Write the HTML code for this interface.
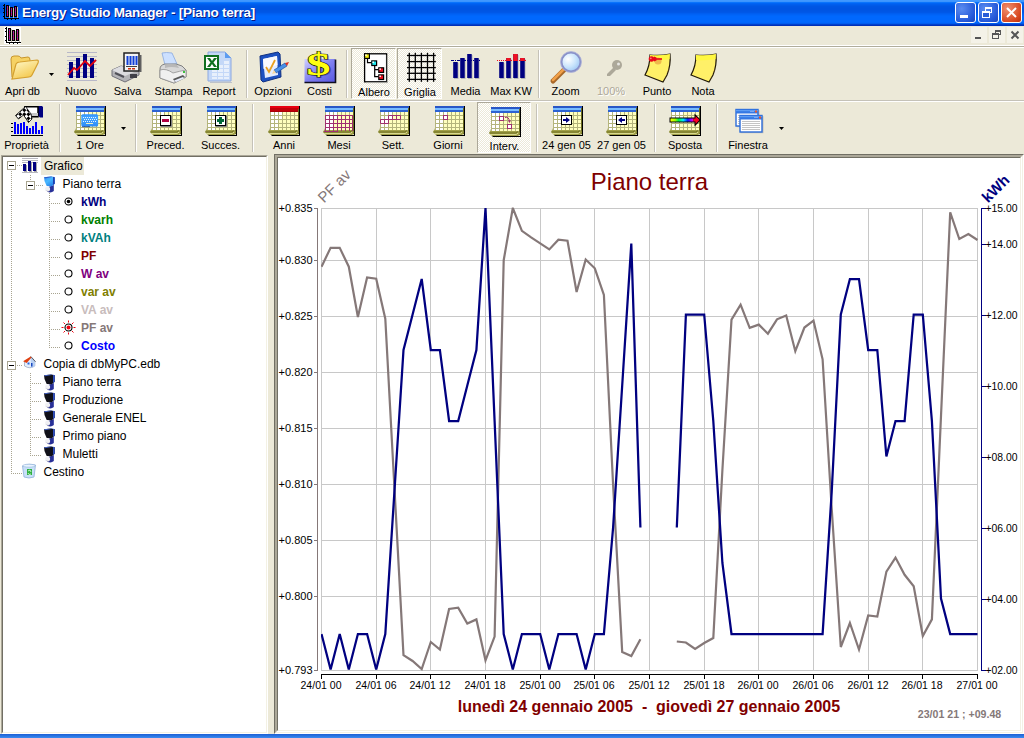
<!DOCTYPE html>
<html><head><meta charset="utf-8"><title>Energy Studio Manager - [Piano terra]</title>
<style>
html,body{margin:0;padding:0;}
body{width:1024px;height:738px;overflow:hidden;background:#ece9d8;font-family:"Liberation Sans",sans-serif;position:relative;}
.abs{position:absolute;}
#title{left:0;top:0;width:1024px;height:26px;background:linear-gradient(to bottom,#4098ff 0px,#4098ff 1px,#3c94fd 1px,#3c94fd 2px,#0a74fc 2px,#0a74fc 3px,#0064f4 3px,#0064f4 4px,#005eee 4px,#005eee 5px,#005ae8 5px,#005ae8 6px,#0056e4 6px,#0056e4 7px,#0055e3 7px,#0055e3 8px,#0054e2 8px,#0054e2 9px,#0054e2 9px,#0054e2 10px,#0055e3 10px,#0055e3 11px,#0056e5 11px,#0056e5 12px,#0058e8 12px,#0058e8 13px,#005ef0 13px,#005ef0 14px,#0062f6 14px,#0062f6 15px,#0066fa 15px,#0066fa 16px,#0068fe 16px,#0068fe 17px,#0068fe 17px,#0068fe 18px,#0068fe 18px,#0068fe 19px,#0068fe 19px,#0068fe 20px,#0068fe 20px,#0068fe 21px,#0068fe 21px,#0068fe 22px,#0066fb 22px,#0066fb 23px,#005cee 23px,#005cee 24px,#0040cc 24px,#0040cc 25px,#0030b8 25px,#0030b8 26px);}
#title .t{left:22px;top:5px;color:#fff;font-weight:bold;font-size:13.500px;white-space:nowrap;text-shadow:1px 1px 0 #0a1883;letter-spacing:-0.250px;}
.cap{top:2px;width:21px;height:21px;border-radius:3px;box-sizing:border-box;border:1px solid #fff;background:radial-gradient(circle at 30% 30%,#5a8cf0,#2458d8 70%,#1c46b8);}
.cap.x{background:radial-gradient(circle at 30% 30%,#f09070,#d84820 70%,#b83010);}
#menubar{left:0;top:26px;width:1024px;height:20px;background:#ece9d8;}
.tb{font-size:11px;color:#000;white-space:nowrap;text-align:center;}
.lbl{position:absolute;font-size:11px;color:#000;white-space:nowrap;transform:translateX(-50%);}
.sep{position:absolute;width:1px;background:#c5c2b8;box-shadow:1px 0 0 #fff;}
.tree{position:absolute;font-size:12px;white-space:nowrap;color:#000;}
.ax{font-size:11px;fill:#000;font-family:"Liberation Sans",sans-serif;}
</style></head><body>
<!-- title bar -->
<div id="title" class="abs">
 <svg class="abs" style="left:3px;top:4px" width="16" height="16" viewBox="0 0 16 16"><rect x="1" y="0" width="1" height="15" fill="#000"/><rect x="1" y="14" width="15" height="1" fill="#000"/><rect x="0" y="1" width="1" height="1" fill="#000"/><rect x="0" y="4" width="1" height="1" fill="#000"/><rect x="0" y="8" width="1" height="1" fill="#000"/><rect x="0" y="12" width="1" height="1" fill="#000"/><rect x="4" y="15" width="1" height="1" fill="#000"/><rect x="8" y="15" width="1" height="1" fill="#000"/><rect x="12" y="15" width="1" height="1" fill="#000"/><rect x="6" y="2" width="1" height="12" fill="#c8c0b0"/><rect x="3" y="1" width="3" height="12" fill="#000"/><rect x="4" y="2" width="1" height="10" fill="#c8107c"/><rect x="4" y="3" width="1" height="1" fill="#8030c0"/><rect x="4" y="6" width="1" height="1" fill="#8030c0"/><rect x="4" y="9" width="1" height="1" fill="#8030c0"/><rect x="10" y="4" width="1" height="10" fill="#c8c0b0"/><rect x="7" y="3" width="3" height="10" fill="#000"/><rect x="8" y="4" width="1" height="8" fill="#c8107c"/><rect x="8" y="5" width="1" height="1" fill="#8030c0"/><rect x="8" y="8" width="1" height="1" fill="#8030c0"/><rect x="8" y="11" width="1" height="1" fill="#8030c0"/><rect x="14" y="3" width="1" height="11" fill="#c8c0b0"/><rect x="11" y="2" width="3" height="11" fill="#000"/><rect x="12" y="3" width="1" height="9" fill="#c8107c"/><rect x="12" y="4" width="1" height="1" fill="#8030c0"/><rect x="12" y="7" width="1" height="1" fill="#8030c0"/><rect x="12" y="10" width="1" height="1" fill="#8030c0"/></svg>
 <div class="abs t">Energy Studio Manager - [Piano terra]</div>
 <div class="abs cap" style="left:955px"><div class="abs" style="left:4px;top:12px;width:8px;height:3px;background:#fff"></div></div>
 <div class="abs cap" style="left:978px"><div class="abs" style="left:6px;top:4px;width:7px;height:6px;border:1px solid #fff;border-top-width:2px;box-sizing:border-box"></div><div class="abs" style="left:3px;top:8px;width:8px;height:7px;border:1px solid #fff;border-top-width:2px;box-sizing:border-box;background:#2a5cd8"></div></div>
 <div class="abs cap x" style="left:1001px"><svg class="abs" style="left:3px;top:3px" width="13" height="13" viewBox="0 0 13 13"><path d="M2,2 L11,11 M11,2 L2,11" stroke="#fff" stroke-width="2"/></svg></div>
</div>
<!-- menu bar -->
<div id="menubar" class="abs">
 <svg class="abs" style="left:4px;top:1px;background:#fff" width="17" height="17" viewBox="-1 0 17 17"><rect x="1" y="0" width="1" height="16" fill="#000"/><rect x="1" y="15" width="15" height="1" fill="#000"/><rect x="0" y="1" width="1" height="1" fill="#000"/><rect x="0" y="4" width="1" height="1" fill="#000"/><rect x="0" y="9" width="1" height="1" fill="#000"/><rect x="0" y="13" width="1" height="1" fill="#000"/><rect x="4" y="16" width="1" height="1" fill="#000"/><rect x="8" y="16" width="1" height="1" fill="#000"/><rect x="12" y="16" width="1" height="1" fill="#000"/><rect x="6" y="2" width="1" height="13" fill="#c8c0b0"/><rect x="3" y="1" width="3" height="13" fill="#000"/><rect x="4" y="2" width="1" height="11" fill="#c8107c"/><rect x="4" y="3" width="1" height="1" fill="#8030c0"/><rect x="4" y="6" width="1" height="1" fill="#8030c0"/><rect x="4" y="9" width="1" height="1" fill="#8030c0"/><rect x="4" y="12" width="1" height="1" fill="#8030c0"/><rect x="10" y="4" width="1" height="11" fill="#c8c0b0"/><rect x="7" y="3" width="3" height="11" fill="#000"/><rect x="8" y="4" width="1" height="9" fill="#c8107c"/><rect x="8" y="5" width="1" height="1" fill="#8030c0"/><rect x="8" y="8" width="1" height="1" fill="#8030c0"/><rect x="8" y="11" width="1" height="1" fill="#8030c0"/><rect x="14" y="3" width="1" height="12" fill="#c8c0b0"/><rect x="11" y="2" width="3" height="12" fill="#000"/><rect x="12" y="3" width="1" height="10" fill="#c8107c"/><rect x="12" y="4" width="1" height="1" fill="#8030c0"/><rect x="12" y="7" width="1" height="1" fill="#8030c0"/><rect x="12" y="10" width="1" height="1" fill="#8030c0"/></svg>
 <div class="abs" style="left:971px;top:1px;width:16px;height:16px;background:#f4f2e8"><div class="abs" style="left:4px;top:10px;width:6px;height:2px;background:#555"></div></div>
 <div class="abs" style="left:989px;top:1px;width:16px;height:16px;background:#f4f2e8"><div class="abs" style="left:6px;top:3px;width:6px;height:5px;border:1px solid #555;border-top-width:2px;box-sizing:border-box"></div><div class="abs" style="left:3px;top:6px;width:7px;height:6px;border:1px solid #555;border-top-width:2px;box-sizing:border-box;background:#f4f2e8"></div></div>
 <div class="abs" style="left:1007px;top:1px;width:16px;height:16px;background:#f4f2e8"><svg class="abs" style="left:3px;top:3px" width="10" height="10" viewBox="0 0 10 10"><path d="M1.500,1.500 L8.500,8.500 M8.500,1.500 L1.500,8.500" stroke="#555" stroke-width="2"/></svg></div>
</div>
<div class="abs" style="left:0;top:45px;width:1024px;height:1px;background:#fff"></div>
<div class="abs" style="left:0;top:46px;width:1024px;height:1px;background:#b0ad9c"></div>
<div class="abs" style="left:0;top:47px;width:1024px;height:1px;background:#fff"></div>
<div class="abs" style="left:0;top:100px;width:1024px;height:1px;background:#c5c2b8"></div>
<div class="abs" style="left:0;top:101px;width:1024px;height:1px;background:#fff"></div>
<div class="abs" style="left:351px;top:48px;width:45px;height:51px;box-sizing:border-box;background:repeating-conic-gradient(#fff 0 25%,#ece9d8 0 50%) 0 0/2px 2px;border:1px solid #fff;border-top-color:#aca899;border-left-color:#aca899"></div><div class="abs" style="left:397px;top:48px;width:45px;height:51px;box-sizing:border-box;background:repeating-conic-gradient(#fff 0 25%,#ece9d8 0 50%) 0 0/2px 2px;border:1px solid #fff;border-top-color:#aca899;border-left-color:#aca899"></div><div class="abs" style="left:477px;top:102px;width:54px;height:51px;box-sizing:border-box;background:repeating-conic-gradient(#fff 0 25%,#ece9d8 0 50%) 0 0/2px 2px;border:1px solid #fff;border-top-color:#aca899;border-left-color:#aca899"></div><svg class="abs" style="left:7px;top:51px;overflow:visible" width="32" height="32" viewBox="0 0 32 32"><defs><linearGradient id="fg" x1="0" y1="0" x2="0.600" y2="1"><stop offset="0" stop-color="#fffbd0"/><stop offset="1" stop-color="#f4c84c"/></linearGradient></defs>
<path d="M4,8 Q4,5 7,5 H11 Q13,5 14,7 L21,6 Q23,6 23,9 V14 L5,26 Z" fill="#f6d264" stroke="#c8962c" stroke-width="1"/>
<path d="M5,28 L9,13 Q10,11 13,11 L30,9 Q32,9 31,12 L25,24 Q24,26 22,26 Z" fill="url(#fg)" stroke="#d4a030" stroke-width="1.200"/></svg><div class="lbl" style="left:22.5px;top:85px;">Apri db</div><svg class="abs" style="left:66px;top:50px;overflow:visible" width="32" height="32" viewBox="0 0 32 32"><g fill="#b8b8c8"><rect x="1" y="2" width="30" height="1"/><rect x="1" y="6" width="30" height="1"/><rect x="1" y="10" width="30" height="1"/><rect x="1" y="14" width="30" height="1"/><rect x="1" y="18" width="30" height="1"/><rect x="1" y="22" width="30" height="1"/><rect x="1" y="26" width="30" height="1"/><rect x="1" y="30" width="30" height="1"/></g>
<g fill="#000080"><rect x="3" y="12" width="4" height="16"/><rect x="10" y="8" width="4" height="20"/><rect x="17" y="4" width="4" height="24"/><rect x="24" y="8" width="4" height="20"/></g>
<polyline points="2,25 8,18 11,20 19,11 24,16 30,10" fill="none" stroke="#e00010" stroke-width="1.800"/></svg><div class="lbl" style="left:81px;top:85px;">Nuovo</div><svg class="abs" style="left:111px;top:51.5px;overflow:visible" width="32" height="32" viewBox="0 0 32 32"><path d="M1,18 L10,14 L28,18 V23 L14,30 L1,24 Z" fill="#b4b4b8" stroke="#707078" stroke-width="1"/>
<path d="M1,18 L10,14 L28,18 L14,24 Z" fill="#dcdce0"/>
<path d="M4,21 L13,25" stroke="#505058" stroke-width="2"/>
<rect x="19" y="22" width="7" height="4" fill="#404048"/>
<rect x="13" y="1" width="15" height="18" fill="#f4f4f4" stroke="#202020" stroke-width="1.500"/>
<rect x="29" y="3" width="1.500" height="17" fill="#606060"/>
<g fill="#1040d8"><rect x="15.500" y="4" width="2" height="9"/><rect x="18.500" y="4" width="2" height="9"/><rect x="21.500" y="4" width="2" height="9"/><rect x="24.500" y="4" width="2" height="9"/></g>
<rect x="15" y="14" width="11" height="1" fill="#404040"/>
<rect x="17" y="16" width="3" height="1.500" fill="#d03010"/><rect x="21" y="16" width="3" height="1.500" fill="#d03010"/></svg><div class="lbl" style="left:127.5px;top:85px;">Salva</div><svg class="abs" style="left:156px;top:51.5px;overflow:visible" width="32" height="32" viewBox="0 0 32 32"><path d="M9,13 L6,1 Q10,0 16,1 L21,12 Z" fill="#cce0ff" stroke="#88a8e0" stroke-width="0.800"/>
<path d="M4,17 Q4,13 9,12 H20 Q27,13 30,18 V25 L18,31 L4,26 Z" fill="#d8d8d8" stroke="#808080" stroke-width="1"/>
<path d="M4,18 Q10,16 17,21 Q24,19 30,18 V25 L18,31 L4,26 Z" fill="#f0f0f0" stroke="#909090" stroke-width="0.800"/>
<path d="M9,13 Q14,11 21,13 L23,16 Q15,14 9,16 Z" fill="#b8b8b8"/>
<path d="M17,27 L27,23 L29,25 L19,30 Z" fill="#585858"/>
<path d="M18,28.500 L27,25 L28,26.500 L20,30 Z" fill="#e8eefc"/>
<rect x="27" y="19" width="2" height="2" fill="#40c040"/></svg><div class="lbl" style="left:173.5px;top:85px;">Stampa</div><svg class="abs" style="left:200px;top:50.5px;overflow:visible" width="32" height="32" viewBox="0 0 32 32"><path d="M8,1 H25 L31,7 V30 H8 Z" fill="#c4d8f8" stroke="#8ca8e0" stroke-width="1"/>
<path d="M25,1 L31,7 H25 Z" fill="#5c9cf0"/>
<rect x="10" y="31" width="22" height="1" fill="#a0a8c0" opacity="0.600"/>
<g fill="#e8f0fc"><rect x="12" y="14" width="5" height="3"/><rect x="18" y="14" width="5" height="3"/><rect x="24" y="10" width="5" height="3"/><rect x="24" y="14" width="5" height="3"/><rect x="12" y="18" width="5" height="3"/><rect x="18" y="18" width="5" height="3"/><rect x="24" y="18" width="5" height="3"/><rect x="12" y="22" width="5" height="3"/><rect x="18" y="22" width="5" height="3"/><rect x="24" y="22" width="5" height="3"/><rect x="12" y="26" width="5" height="2"/><rect x="18" y="26" width="5" height="2"/><rect x="24" y="26" width="5" height="2"/></g>
<rect x="5" y="5" width="13" height="13" fill="#fff" stroke="#107020" stroke-width="2"/>
<path d="M7,7 H10 L12,10 L14,7 H17 L13.500,11.500 L17,16 H14 L12,13 L10,16 H7 L10.500,11.500 Z" fill="#107020"/></svg><div class="lbl" style="left:219px;top:85px;">Report</div><svg class="abs" style="left:257px;top:50.5px;overflow:visible" width="32" height="32" viewBox="0 0 32 32"><path d="M3,5 L21,1 L23,3 L24,26 L6,31 L4,29 Z" fill="#1c50c0" stroke="#103080" stroke-width="1"/>
<path d="M6,8 L20,5 L21,24 L8,27 Z" fill="#e4ecfc"/>
<path d="M6,8 L20,5 L20.500,14 L6.500,18 Z" fill="#f8faff"/>
<polyline points="9,16 12,21 18,9" fill="none" stroke="#e8a020" stroke-width="1.800"/>
<path d="M17,19 L28,12 L30,15 L19,22 Z" fill="#4890e8" stroke="#2050a0" stroke-width="0.700"/>
<path d="M28,12 L32,11 L30,15 Z" fill="#e03020"/>
<path d="M17,19 L19,22 L15,23 Z" fill="#f8d8a0"/></svg><div class="lbl" style="left:273px;top:85px;">Opzioni</div><svg class="abs" style="left:304px;top:51px;overflow:visible" width="32" height="32" viewBox="0 0 32 32"><defs><linearGradient id="cg" x1="0" y1="0" x2="1" y2="1"><stop offset="0" stop-color="#d0d0ff"/><stop offset="0.5" stop-color="#8080f0"/><stop offset="1" stop-color="#5858e0"/></linearGradient></defs>
<path d="M0.500,8 H31 V31.500 H0.500 Z" fill="url(#cg)"/>
<path d="M0.500,31.500 H31.500 V8.500" fill="none" stroke="#101020" stroke-width="1.600"/>
<g transform="translate(14.500,0) scale(1.500,1)"><text x="1.200" y="25" text-anchor="middle" font-family="'Liberation Serif',serif" font-weight="bold" font-size="32" fill="#303060" opacity="0.450">$</text>
<text x="0" y="24" text-anchor="middle" font-family="'Liberation Serif',serif" font-weight="bold" font-size="32" fill="#ffff10" stroke="#181808" stroke-width="1.100" paint-order="stroke">$</text></g></svg><div class="lbl" style="left:319.5px;top:85px;">Costi</div><svg class="abs" style="left:359px;top:51px;overflow:visible" width="32" height="32" viewBox="0 0 32 32"><rect x="5.600" y="2.800" width="22" height="28" fill="#fff" stroke="#000" stroke-width="1.300"/>
<rect x="27.800" y="4" width="1" height="28" fill="#b0b0a8"/><rect x="7" y="31.300" width="22" height="0.800" fill="#b0b0a8"/>
<path d="M8.500,7.500 V11.600 H12.500 M15.700,14.500 V25.600 H19.500 M15.700,18.700 H19.500" fill="none" stroke="#000" stroke-width="1.200"/>
<rect x="5.600" y="2.800" width="4.800" height="4.600" fill="#f8f010" stroke="#000" stroke-width="1.200"/>
<rect x="12.800" y="9.900" width="4.800" height="4.600" fill="#20e8f0" stroke="#000" stroke-width="1.200"/>
<rect x="19.800" y="16.800" width="4.800" height="4.600" fill="#f01020" stroke="#000" stroke-width="1.200"/>
<rect x="19.800" y="23.900" width="4.800" height="4.600" fill="#f01020" stroke="#000" stroke-width="1.200"/>
<rect x="6.200" y="3.400" width="1.500" height="1.500" fill="#fff"/><rect x="13.400" y="10.500" width="1.500" height="1.500" fill="#fff"/><rect x="20.400" y="17.400" width="1.500" height="1.500" fill="#fff"/><rect x="20.400" y="24.500" width="1.500" height="1.500" fill="#fff"/></svg><div class="lbl" style="left:374px;top:86px;">Albero</div><svg class="abs" style="left:405px;top:51px;overflow:visible" width="32" height="32" viewBox="0 0 32 32"><rect x="3.65" y="1.800" width="1.300" height="29" fill="#000"/><rect x="9.65" y="1.800" width="1.300" height="29" fill="#000"/><rect x="15.75" y="1.800" width="1.300" height="29" fill="#000"/><rect x="21.85" y="1.800" width="1.300" height="29" fill="#000"/><rect x="27.95" y="1.800" width="1.300" height="29" fill="#000"/><rect x="2" y="3.85" width="28.800" height="1.300" fill="#000"/><rect x="2" y="9.95" width="28.800" height="1.300" fill="#000"/><rect x="2" y="15.95" width="28.800" height="1.300" fill="#000"/><rect x="2" y="21.65" width="28.800" height="1.300" fill="#000"/><rect x="2" y="27.75" width="28.800" height="1.300" fill="#000"/></svg><div class="lbl" style="left:420px;top:86px;">Griglia</div><svg class="abs" style="left:448.5px;top:51px;overflow:visible" width="32" height="32" viewBox="0 0 32 32"><g fill="#b4b4b4"><rect x="5" y="12" width="4.500" height="16"/><rect x="12" y="8" width="4.500" height="20"/><rect x="19" y="4" width="4.500" height="24"/><rect x="26" y="8" width="4.500" height="20"/></g>
<g fill="#000080"><rect x="4.200" y="11" width="4.500" height="16"/><rect x="11.200" y="7" width="4.500" height="20"/><rect x="18.200" y="3" width="4.500" height="24"/><rect x="25.200" y="7" width="4.500" height="20"/></g>
<path d="M2,9.500 H32" stroke="#000080" stroke-width="1" stroke-dasharray="3,1,1,1"/></svg><div class="lbl" style="left:465.5px;top:85px;">Media</div><svg class="abs" style="left:494.5px;top:51px;overflow:visible" width="32" height="32" viewBox="0 0 32 32"><g fill="#b4b4b4"><rect x="5" y="12" width="4.500" height="16"/><rect x="12" y="8" width="4.500" height="20"/><rect x="19" y="4" width="4.500" height="24"/><rect x="26" y="8" width="4.500" height="20"/></g>
<g fill="#000080"><rect x="4.200" y="11" width="4.500" height="16"/><rect x="11.200" y="7" width="4.500" height="20"/><rect x="18.200" y="3" width="4.500" height="24"/><rect x="25.200" y="7" width="4.500" height="20"/></g>
<g fill="#f01020"><rect x="11.200" y="7" width="4.500" height="3"/><rect x="18.200" y="3" width="4.500" height="7"/><rect x="25.200" y="7" width="4.500" height="3"/></g>
<path d="M2,9.500 H32" stroke="#f01020" stroke-width="1" stroke-dasharray="1,1"/></svg><div class="lbl" style="left:511px;top:85px;">Max KW</div><svg class="abs" style="left:550px;top:51px;overflow:visible" width="32" height="32" viewBox="0 0 32 32"><defs><radialGradient id="lz" cx="0.350" cy="0.350" r="0.700"><stop offset="0" stop-color="#ffffff"/><stop offset="0.600" stop-color="#c8e4fc"/><stop offset="1" stop-color="#a0c8f4"/></radialGradient></defs>
<path d="M14,19 L3,30" stroke="#a86828" stroke-width="5" stroke-linecap="round"/>
<path d="M13.500,18.500 L3,29" stroke="#f0a048" stroke-width="2.500" stroke-linecap="round"/>
<circle cx="21" cy="11" r="9.500" fill="url(#lz)" stroke="#8890c8" stroke-width="2"/>
<circle cx="21" cy="11" r="10.500" fill="none" stroke="#b0b4d8" stroke-width="0.800"/></svg><div class="lbl" style="left:565.5px;top:85px;">Zoom</div><svg class="abs" style="left:597.5px;top:51px;overflow:visible" width="32" height="32" viewBox="0 0 32 32"><g fill="#aca899"><circle cx="19" cy="14" r="5"/><path d="M16,16 L9,23 L9,25 L12,25 L18,19 Z"/></g>
<g fill="#fff" opacity="0.700"><circle cx="20.500" cy="13" r="1.500"/></g></svg><div class="lbl" style="left:611px;top:85px;color:#aca899;text-shadow:1px 1px 0 #fff;">100%</div><svg class="abs" style="left:641px;top:51px;overflow:visible" width="32" height="32" viewBox="0 0 32 32"><path d="M9,4 Q20,5 29,3 Q30,14 26,24 L22,31 L4,24 Q9,15 9,4 Z" fill="#fff068" stroke="#201808" stroke-width="1.200"/>
<path d="M9,4 Q20,5 29,3 L28.500,8 Q18,10 9,9 Z" fill="#fff840"/>
<path d="M22,31 L26,24 Q27,20 28,16 Q27,24 22,31 Z" fill="#e09040"/>
<circle cx="17" cy="10" r="3.500" fill="#e8a040" opacity="0.700"/>
<path d="M12,7.200 H21 V8.800 H12 Z" fill="#e80818"/>
<path d="M13,5.500 L15.500,6.500 V9.500 L13,10.500 Z" fill="#e80818"/>
<circle cx="10.500" cy="8" r="2.800" fill="#e80818"/><circle cx="9.800" cy="7.300" r="0.900" fill="#ff8080"/></svg><div class="lbl" style="left:657px;top:85px;">Punto</div><svg class="abs" style="left:687px;top:51px;overflow:visible" width="32" height="32" viewBox="0 0 32 32"><path d="M9,4 Q20,5 29,3 Q30,14 26,24 L22,31 L4,24 Q9,15 9,4 Z" fill="#fff068" stroke="#201808" stroke-width="1.200"/>
<path d="M9,4 Q20,5 29,3 L28.500,8 Q18,10 9,9 Z" fill="#fff840"/>
<path d="M22,31 L26,24 Q27,20 28,16 Q27,24 22,31 Z" fill="#e09040"/></svg><div class="lbl" style="left:703px;top:85px;">Nota</div><svg class="abs" style="left:49px;top:73px" width="5" height="3" viewBox="0 0 5 3"><path d="M0,0 H5 L2.500,3 Z" fill="#000"/></svg><div class="sep" style="left:246px;top:50px;height:48px"></div><div class="sep" style="left:346px;top:50px;height:48px"></div><div class="sep" style="left:538px;top:50px;height:48px"></div><svg class="abs" style="left:11px;top:104px;overflow:visible" width="32" height="32" viewBox="0 0 32 32"><defs><pattern id="ck" width="5.800" height="5.800" patternUnits="userSpaceOnUse" patternTransform="translate(1,0) rotate(45)"><rect width="5.800" height="5.800" fill="#fff"/><rect width="2.900" height="2.900" fill="#000"/><rect x="2.900" y="2.900" width="2.900" height="2.900" fill="#000"/></pattern></defs>
<rect x="0" y="31" width="32" height="1" fill="#000"/>
<g fill="#000"><rect x="0" y="19" width="2" height="1"/><rect x="0" y="23" width="2" height="1"/><rect x="0" y="27" width="2" height="1"/></g><rect x="3" y="18" width="2" height="12" fill="#0000ff"/><rect x="6" y="20" width="2" height="10" fill="#0000ff"/><rect x="9" y="19" width="2" height="11" fill="#0000ff"/><rect x="12" y="18" width="2" height="12" fill="#0000ff"/><rect x="15" y="22" width="2" height="8" fill="#0000ff"/><rect x="18" y="24" width="2" height="6" fill="#0000ff"/><rect x="21" y="22" width="2" height="8" fill="#0000ff"/><rect x="24" y="18" width="2" height="12" fill="#0000ff"/><rect x="27" y="26" width="2" height="4" fill="#0000ff"/><rect x="30" y="22" width="2" height="8" fill="#0000ff"/>
<path d="M26,2 H31 L32,3 V13.500 H29 L26,11 Z" fill="#000080"/>
<path d="M14,2.700 H27 V12.800 H18 Z" fill="#fff" stroke="#000" stroke-width="1.500"/>
<path d="M19,9 H27 V12 H20 Z" fill="#c8c8c8"/>
<path d="M14.500,2.500 L4.500,11.500 L7.500,15 L12.500,11 L17.500,18.500 L21,15 L20,10 Z" fill="url(#ck)" stroke="#000" stroke-width="0.800"/></svg><div class="lbl" style="left:26.5px;top:139px;">Proprietà</div><svg class="abs" style="left:74px;top:104px;overflow:visible" width="32" height="32" viewBox="0 0 32 32"><path d="M31,2 H32 V30 H31 Z" fill="#000"/><path d="M29.500,4 H31 V30 L29.500,30.500 Z" fill="#6c6c20"/><path d="M1,26 H28 L30.500,27 V29 L29,31 H3 L0,28 Z" fill="#a0a048"/><path d="M3,31 H31 V30 H32 V32 H4 Z" fill="#000"/><path d="M0.500,28 H27 L29,26.500" fill="none" stroke="#6c6c20" stroke-width="1"/><path d="M1.500,29.500 H27.500 L29,28" fill="none" stroke="#d8d890" stroke-width="1"/><rect x="2" y="8" width="28" height="18" fill="#b4b47c"/><rect x="3" y="8" width="3" height="3" fill="#ffffff"/><rect x="7" y="8" width="3" height="3" fill="#ffffff"/><rect x="11" y="8" width="3" height="3" fill="#ffffff"/><rect x="15" y="8" width="3" height="3" fill="#ffffbe"/><rect x="19" y="8" width="3" height="3" fill="#ffffbe"/><rect x="23" y="8" width="3" height="3" fill="#ffffbe"/><rect x="27" y="8" width="3" height="3" fill="#ffffbe"/><rect x="3" y="12" width="3" height="3" fill="#ffffff"/><rect x="7" y="12" width="3" height="3" fill="#ffffff"/><rect x="11" y="12" width="3" height="3" fill="#ffffff"/><rect x="15" y="12" width="3" height="3" fill="#ffffbe"/><rect x="19" y="12" width="3" height="3" fill="#ffffbe"/><rect x="23" y="12" width="3" height="3" fill="#ffffbe"/><rect x="27" y="12" width="3" height="3" fill="#ffffbe"/><rect x="3" y="16" width="3" height="3" fill="#ffffff"/><rect x="7" y="16" width="3" height="3" fill="#ffffff"/><rect x="11" y="16" width="3" height="3" fill="#ffffbe"/><rect x="15" y="16" width="3" height="3" fill="#ffffbe"/><rect x="19" y="16" width="3" height="3" fill="#ffffbe"/><rect x="23" y="16" width="3" height="3" fill="#ffffbe"/><rect x="27" y="16" width="3" height="3" fill="#ffffbe"/><rect x="3" y="20" width="3" height="3" fill="#ffffff"/><rect x="7" y="20" width="3" height="3" fill="#ffffff"/><rect x="11" y="20" width="3" height="3" fill="#ffffbe"/><rect x="15" y="20" width="3" height="3" fill="#ffffbe"/><rect x="19" y="20" width="3" height="3" fill="#ffffbe"/><rect x="23" y="20" width="3" height="3" fill="#ffffbe"/><rect x="27" y="20" width="3" height="3" fill="#ffffbe"/><rect x="3" y="24" width="3" height="2" fill="#ffffff"/><rect x="7" y="24" width="3" height="2" fill="#ffffff"/><rect x="11" y="24" width="3" height="2" fill="#ffffbe"/><rect x="15" y="24" width="3" height="2" fill="#ffffbe"/><rect x="19" y="24" width="3" height="2" fill="#ffffbe"/><rect x="23" y="24" width="3" height="2" fill="#ffffbe"/><rect x="27" y="24" width="3" height="2" fill="#ffffbe"/><path d="M1,26 L2,24 V26 Z" fill="#b4b47c"/><rect x="2" y="2" width="29" height="2" fill="#2856c6"/><rect x="2" y="4" width="28" height="2" fill="#78bcff"/><rect x="2" y="6" width="28" height="2" fill="#2c62d2"/><defs><linearGradient id="kbg" x1="0" y1="0" x2="0" y2="1"><stop offset="0" stop-color="#2c90ff"/><stop offset="0.300" stop-color="#48a8ff"/><stop offset="1" stop-color="#2c8cf8"/></linearGradient></defs><rect x="7.300" y="10.200" width="16.800" height="12.400" rx="1.500" fill="url(#kbg)"/><rect x="8" y="22.300" width="8" height="0.800" fill="#1040a0"/><rect x="9.0" y="13.0" width="1" height="1" fill="#e8f4ff"/><rect x="11.0" y="13.0" width="1" height="1" fill="#e8f4ff"/><rect x="13.0" y="13.0" width="1" height="1" fill="#e8f4ff"/><rect x="15.0" y="13.0" width="1" height="1" fill="#e8f4ff"/><rect x="17.0" y="13.0" width="1" height="1" fill="#e8f4ff"/><rect x="19.0" y="13.0" width="1" height="1" fill="#e8f4ff"/><rect x="21.0" y="13.0" width="1" height="1" fill="#e8f4ff"/><rect x="10.0" y="15.0" width="1" height="1" fill="#e8f4ff"/><rect x="12.0" y="15.0" width="1" height="1" fill="#e8f4ff"/><rect x="14.0" y="15.0" width="1" height="1" fill="#e8f4ff"/><rect x="16.0" y="15.0" width="1" height="1" fill="#e8f4ff"/><rect x="18.0" y="15.0" width="1" height="1" fill="#e8f4ff"/><rect x="20.0" y="15.0" width="1" height="1" fill="#e8f4ff"/><rect x="22.0" y="15.0" width="1" height="1" fill="#e8f4ff"/><rect x="9.0" y="17.0" width="1" height="1" fill="#e8f4ff"/><rect x="11.0" y="17.0" width="1" height="1" fill="#e8f4ff"/><rect x="13.0" y="17.0" width="1" height="1" fill="#e8f4ff"/><rect x="15.0" y="17.0" width="1" height="1" fill="#e8f4ff"/><rect x="17.0" y="17.0" width="1" height="1" fill="#e8f4ff"/><rect x="19.0" y="17.0" width="1" height="1" fill="#e8f4ff"/><rect x="21.0" y="17.0" width="1" height="1" fill="#e8f4ff"/><rect x="12" y="19" width="7" height="1" fill="#f0f0c0"/></svg><div class="lbl" style="left:90px;top:139px;">1 Ore</div><svg class="abs" style="left:150px;top:104px;overflow:visible" width="32" height="32" viewBox="0 0 32 32"><path d="M31,2 H32 V30 H31 Z" fill="#000"/><path d="M29.500,4 H31 V30 L29.500,30.500 Z" fill="#6c6c20"/><path d="M1,26 H28 L30.500,27 V29 L29,31 H3 L0,28 Z" fill="#a0a048"/><path d="M3,31 H31 V30 H32 V32 H4 Z" fill="#000"/><path d="M0.500,28 H27 L29,26.500" fill="none" stroke="#6c6c20" stroke-width="1"/><path d="M1.500,29.500 H27.500 L29,28" fill="none" stroke="#d8d890" stroke-width="1"/><rect x="2" y="8" width="28" height="18" fill="#b4b47c"/><rect x="3" y="8" width="3" height="3" fill="#ffffff"/><rect x="7" y="8" width="3" height="3" fill="#ffffff"/><rect x="11" y="8" width="3" height="3" fill="#ffffff"/><rect x="15" y="8" width="3" height="3" fill="#ffffbe"/><rect x="19" y="8" width="3" height="3" fill="#ffffbe"/><rect x="23" y="8" width="3" height="3" fill="#ffffbe"/><rect x="27" y="8" width="3" height="3" fill="#ffffbe"/><rect x="3" y="12" width="3" height="3" fill="#ffffff"/><rect x="7" y="12" width="3" height="3" fill="#ffffff"/><rect x="11" y="12" width="3" height="3" fill="#ffffff"/><rect x="15" y="12" width="3" height="3" fill="#ffffbe"/><rect x="19" y="12" width="3" height="3" fill="#ffffbe"/><rect x="23" y="12" width="3" height="3" fill="#ffffbe"/><rect x="27" y="12" width="3" height="3" fill="#ffffbe"/><rect x="3" y="16" width="3" height="3" fill="#ffffff"/><rect x="7" y="16" width="3" height="3" fill="#ffffff"/><rect x="11" y="16" width="3" height="3" fill="#ffffbe"/><rect x="15" y="16" width="3" height="3" fill="#ffffbe"/><rect x="19" y="16" width="3" height="3" fill="#ffffbe"/><rect x="23" y="16" width="3" height="3" fill="#ffffbe"/><rect x="27" y="16" width="3" height="3" fill="#ffffbe"/><rect x="3" y="20" width="3" height="3" fill="#ffffff"/><rect x="7" y="20" width="3" height="3" fill="#ffffff"/><rect x="11" y="20" width="3" height="3" fill="#ffffbe"/><rect x="15" y="20" width="3" height="3" fill="#ffffbe"/><rect x="19" y="20" width="3" height="3" fill="#ffffbe"/><rect x="23" y="20" width="3" height="3" fill="#ffffbe"/><rect x="27" y="20" width="3" height="3" fill="#ffffbe"/><rect x="3" y="24" width="3" height="2" fill="#ffffff"/><rect x="7" y="24" width="3" height="2" fill="#ffffff"/><rect x="11" y="24" width="3" height="2" fill="#ffffbe"/><rect x="15" y="24" width="3" height="2" fill="#ffffbe"/><rect x="19" y="24" width="3" height="2" fill="#ffffbe"/><rect x="23" y="24" width="3" height="2" fill="#ffffbe"/><rect x="27" y="24" width="3" height="2" fill="#ffffbe"/><path d="M1,26 L2,24 V26 Z" fill="#b4b47c"/><rect x="2" y="2" width="29" height="2" fill="#2856c6"/><rect x="2" y="4" width="28" height="2" fill="#78bcff"/><rect x="2" y="6" width="28" height="2" fill="#2c62d2"/><rect x="10.500" y="11.500" width="10" height="10" fill="#fff" stroke="#000" stroke-width="1"/><rect x="12" y="15" width="7" height="3" fill="#b00040"/><path d="M11,22.500 H21.500 V12" fill="none" stroke="#808080" stroke-width="1"/></svg><div class="lbl" style="left:165.5px;top:139px;">Preced.</div><svg class="abs" style="left:205px;top:104px;overflow:visible" width="32" height="32" viewBox="0 0 32 32"><path d="M31,2 H32 V30 H31 Z" fill="#000"/><path d="M29.500,4 H31 V30 L29.500,30.500 Z" fill="#6c6c20"/><path d="M1,26 H28 L30.500,27 V29 L29,31 H3 L0,28 Z" fill="#a0a048"/><path d="M3,31 H31 V30 H32 V32 H4 Z" fill="#000"/><path d="M0.500,28 H27 L29,26.500" fill="none" stroke="#6c6c20" stroke-width="1"/><path d="M1.500,29.500 H27.500 L29,28" fill="none" stroke="#d8d890" stroke-width="1"/><rect x="2" y="8" width="28" height="18" fill="#b4b47c"/><rect x="3" y="8" width="3" height="3" fill="#ffffff"/><rect x="7" y="8" width="3" height="3" fill="#ffffff"/><rect x="11" y="8" width="3" height="3" fill="#ffffff"/><rect x="15" y="8" width="3" height="3" fill="#ffffbe"/><rect x="19" y="8" width="3" height="3" fill="#ffffbe"/><rect x="23" y="8" width="3" height="3" fill="#ffffbe"/><rect x="27" y="8" width="3" height="3" fill="#ffffbe"/><rect x="3" y="12" width="3" height="3" fill="#ffffff"/><rect x="7" y="12" width="3" height="3" fill="#ffffff"/><rect x="11" y="12" width="3" height="3" fill="#ffffff"/><rect x="15" y="12" width="3" height="3" fill="#ffffbe"/><rect x="19" y="12" width="3" height="3" fill="#ffffbe"/><rect x="23" y="12" width="3" height="3" fill="#ffffbe"/><rect x="27" y="12" width="3" height="3" fill="#ffffbe"/><rect x="3" y="16" width="3" height="3" fill="#ffffff"/><rect x="7" y="16" width="3" height="3" fill="#ffffff"/><rect x="11" y="16" width="3" height="3" fill="#ffffbe"/><rect x="15" y="16" width="3" height="3" fill="#ffffbe"/><rect x="19" y="16" width="3" height="3" fill="#ffffbe"/><rect x="23" y="16" width="3" height="3" fill="#ffffbe"/><rect x="27" y="16" width="3" height="3" fill="#ffffbe"/><rect x="3" y="20" width="3" height="3" fill="#ffffff"/><rect x="7" y="20" width="3" height="3" fill="#ffffff"/><rect x="11" y="20" width="3" height="3" fill="#ffffbe"/><rect x="15" y="20" width="3" height="3" fill="#ffffbe"/><rect x="19" y="20" width="3" height="3" fill="#ffffbe"/><rect x="23" y="20" width="3" height="3" fill="#ffffbe"/><rect x="27" y="20" width="3" height="3" fill="#ffffbe"/><rect x="3" y="24" width="3" height="2" fill="#ffffff"/><rect x="7" y="24" width="3" height="2" fill="#ffffff"/><rect x="11" y="24" width="3" height="2" fill="#ffffbe"/><rect x="15" y="24" width="3" height="2" fill="#ffffbe"/><rect x="19" y="24" width="3" height="2" fill="#ffffbe"/><rect x="23" y="24" width="3" height="2" fill="#ffffbe"/><rect x="27" y="24" width="3" height="2" fill="#ffffbe"/><path d="M1,26 L2,24 V26 Z" fill="#b4b47c"/><rect x="2" y="2" width="29" height="2" fill="#2856c6"/><rect x="2" y="4" width="28" height="2" fill="#78bcff"/><rect x="2" y="6" width="28" height="2" fill="#2c62d2"/><rect x="10.500" y="11.500" width="10" height="10" fill="#fff" stroke="#000" stroke-width="1"/><rect x="12" y="15" width="7" height="3" fill="#006838"/><rect x="14" y="13" width="3" height="7" fill="#006838"/><path d="M11,22.500 H21.500 V12" fill="none" stroke="#808080" stroke-width="1"/></svg><div class="lbl" style="left:220.5px;top:139px;">Succes.</div><svg class="abs" style="left:268px;top:104px;overflow:visible" width="32" height="32" viewBox="0 0 32 32"><path d="M31,2 H32 V30 H31 Z" fill="#000"/><path d="M29.500,4 H31 V30 L29.500,30.500 Z" fill="#6c6c20"/><path d="M1,26 H28 L30.500,27 V29 L29,31 H3 L0,28 Z" fill="#a0a048"/><path d="M3,31 H31 V30 H32 V32 H4 Z" fill="#000"/><path d="M0.500,28 H27 L29,26.500" fill="none" stroke="#6c6c20" stroke-width="1"/><path d="M1.500,29.500 H27.500 L29,28" fill="none" stroke="#d8d890" stroke-width="1"/><rect x="2" y="8" width="28" height="18" fill="#b4b47c"/><rect x="3" y="8" width="3" height="3" fill="#ffffff"/><rect x="7" y="8" width="3" height="3" fill="#ffffff"/><rect x="11" y="8" width="3" height="3" fill="#ffffff"/><rect x="15" y="8" width="3" height="3" fill="#ffffbe"/><rect x="19" y="8" width="3" height="3" fill="#ffffbe"/><rect x="23" y="8" width="3" height="3" fill="#ffffbe"/><rect x="27" y="8" width="3" height="3" fill="#ffffbe"/><rect x="3" y="12" width="3" height="3" fill="#ffffff"/><rect x="7" y="12" width="3" height="3" fill="#ffffff"/><rect x="11" y="12" width="3" height="3" fill="#ffffff"/><rect x="15" y="12" width="3" height="3" fill="#ffffbe"/><rect x="19" y="12" width="3" height="3" fill="#ffffbe"/><rect x="23" y="12" width="3" height="3" fill="#ffffbe"/><rect x="27" y="12" width="3" height="3" fill="#ffffbe"/><rect x="3" y="16" width="3" height="3" fill="#ffffff"/><rect x="7" y="16" width="3" height="3" fill="#ffffff"/><rect x="11" y="16" width="3" height="3" fill="#ffffbe"/><rect x="15" y="16" width="3" height="3" fill="#ffffbe"/><rect x="19" y="16" width="3" height="3" fill="#ffffbe"/><rect x="23" y="16" width="3" height="3" fill="#ffffbe"/><rect x="27" y="16" width="3" height="3" fill="#ffffbe"/><rect x="3" y="20" width="3" height="3" fill="#ffffff"/><rect x="7" y="20" width="3" height="3" fill="#ffffff"/><rect x="11" y="20" width="3" height="3" fill="#ffffbe"/><rect x="15" y="20" width="3" height="3" fill="#ffffbe"/><rect x="19" y="20" width="3" height="3" fill="#ffffbe"/><rect x="23" y="20" width="3" height="3" fill="#ffffbe"/><rect x="27" y="20" width="3" height="3" fill="#ffffbe"/><rect x="3" y="24" width="3" height="2" fill="#ffffff"/><rect x="7" y="24" width="3" height="2" fill="#ffffff"/><rect x="11" y="24" width="3" height="2" fill="#ffffbe"/><rect x="15" y="24" width="3" height="2" fill="#ffffbe"/><rect x="19" y="24" width="3" height="2" fill="#ffffbe"/><rect x="23" y="24" width="3" height="2" fill="#ffffbe"/><rect x="27" y="24" width="3" height="2" fill="#ffffbe"/><path d="M1,26 L2,24 V26 Z" fill="#b4b47c"/><rect x="2" y="2" width="29" height="3" fill="#e80010"/><rect x="2" y="4" width="28" height="3" fill="#c00008"/><rect x="2" y="7" width="28" height="1" fill="#a80008"/></svg><div class="lbl" style="left:284px;top:139px;">Anni</div><svg class="abs" style="left:323px;top:104px;overflow:visible" width="32" height="32" viewBox="0 0 32 32"><path d="M31,2 H32 V30 H31 Z" fill="#000"/><path d="M29.500,4 H31 V30 L29.500,30.500 Z" fill="#6c6c20"/><path d="M1,26 H28 L30.500,27 V29 L29,31 H3 L0,28 Z" fill="#a0a048"/><path d="M3,31 H31 V30 H32 V32 H4 Z" fill="#000"/><path d="M0.500,28 H27 L29,26.500" fill="none" stroke="#6c6c20" stroke-width="1"/><path d="M1.500,29.500 H27.500 L29,28" fill="none" stroke="#d8d890" stroke-width="1"/><rect x="2" y="8" width="28" height="18" fill="#b4b47c"/><rect x="3" y="8" width="3" height="3" fill="#ffffff"/><rect x="7" y="8" width="3" height="3" fill="#ffffff"/><rect x="11" y="8" width="3" height="3" fill="#ffffff"/><rect x="15" y="8" width="3" height="3" fill="#ffffbe"/><rect x="19" y="8" width="3" height="3" fill="#ffffbe"/><rect x="23" y="8" width="3" height="3" fill="#ffffbe"/><rect x="27" y="8" width="3" height="3" fill="#ffffbe"/><rect x="3" y="12" width="3" height="3" fill="#ffffff"/><rect x="7" y="12" width="3" height="3" fill="#ffffff"/><rect x="11" y="12" width="3" height="3" fill="#ffffff"/><rect x="15" y="12" width="3" height="3" fill="#ffffbe"/><rect x="19" y="12" width="3" height="3" fill="#ffffbe"/><rect x="23" y="12" width="3" height="3" fill="#ffffbe"/><rect x="27" y="12" width="3" height="3" fill="#ffffbe"/><rect x="3" y="16" width="3" height="3" fill="#ffffff"/><rect x="7" y="16" width="3" height="3" fill="#ffffff"/><rect x="11" y="16" width="3" height="3" fill="#ffffbe"/><rect x="15" y="16" width="3" height="3" fill="#ffffbe"/><rect x="19" y="16" width="3" height="3" fill="#ffffbe"/><rect x="23" y="16" width="3" height="3" fill="#ffffbe"/><rect x="27" y="16" width="3" height="3" fill="#ffffbe"/><rect x="3" y="20" width="3" height="3" fill="#ffffff"/><rect x="7" y="20" width="3" height="3" fill="#ffffff"/><rect x="11" y="20" width="3" height="3" fill="#ffffbe"/><rect x="15" y="20" width="3" height="3" fill="#ffffbe"/><rect x="19" y="20" width="3" height="3" fill="#ffffbe"/><rect x="23" y="20" width="3" height="3" fill="#ffffbe"/><rect x="27" y="20" width="3" height="3" fill="#ffffbe"/><rect x="3" y="24" width="3" height="2" fill="#ffffff"/><rect x="7" y="24" width="3" height="2" fill="#ffffff"/><rect x="11" y="24" width="3" height="2" fill="#ffffbe"/><rect x="15" y="24" width="3" height="2" fill="#ffffbe"/><rect x="19" y="24" width="3" height="2" fill="#ffffbe"/><rect x="23" y="24" width="3" height="2" fill="#ffffbe"/><rect x="27" y="24" width="3" height="2" fill="#ffffbe"/><path d="M1,26 L2,24 V26 Z" fill="#b4b47c"/><rect x="2" y="2" width="29" height="2" fill="#2856c6"/><rect x="2" y="4" width="28" height="2" fill="#78bcff"/><rect x="2" y="6" width="28" height="2" fill="#2c62d2"/><rect x="2" y="11" width="27" height="1" fill="#a03070"/><rect x="2" y="15" width="27" height="1" fill="#a03070"/><rect x="2" y="19" width="27" height="1" fill="#a03070"/><rect x="2" y="23" width="27" height="1" fill="#a03070"/><rect x="2" y="11" width="1" height="17" fill="#a03070"/><rect x="6" y="11" width="1" height="17" fill="#a03070"/><rect x="10" y="11" width="1" height="17" fill="#a03070"/><rect x="14" y="11" width="1" height="17" fill="#a03070"/><rect x="18" y="11" width="1" height="16" fill="#a03070"/><rect x="22" y="11" width="1" height="16" fill="#a03070"/><rect x="26" y="11" width="1" height="16" fill="#a03070"/><rect x="29" y="11" width="1" height="16" fill="#a03070"/><rect x="1" y="27" width="13" height="1" fill="#a03070"/></svg><div class="lbl" style="left:339px;top:139px;">Mesi</div><svg class="abs" style="left:378px;top:104px;overflow:visible" width="32" height="32" viewBox="0 0 32 32"><path d="M31,2 H32 V30 H31 Z" fill="#000"/><path d="M29.500,4 H31 V30 L29.500,30.500 Z" fill="#6c6c20"/><path d="M1,26 H28 L30.500,27 V29 L29,31 H3 L0,28 Z" fill="#a0a048"/><path d="M3,31 H31 V30 H32 V32 H4 Z" fill="#000"/><path d="M0.500,28 H27 L29,26.500" fill="none" stroke="#6c6c20" stroke-width="1"/><path d="M1.500,29.500 H27.500 L29,28" fill="none" stroke="#d8d890" stroke-width="1"/><rect x="2" y="8" width="28" height="18" fill="#b4b47c"/><rect x="3" y="8" width="3" height="3" fill="#ffffff"/><rect x="7" y="8" width="3" height="3" fill="#ffffff"/><rect x="11" y="8" width="3" height="3" fill="#ffffff"/><rect x="15" y="8" width="3" height="3" fill="#ffffbe"/><rect x="19" y="8" width="3" height="3" fill="#ffffbe"/><rect x="23" y="8" width="3" height="3" fill="#ffffbe"/><rect x="27" y="8" width="3" height="3" fill="#ffffbe"/><rect x="3" y="12" width="3" height="3" fill="#ffffff"/><rect x="7" y="12" width="3" height="3" fill="#ffffff"/><rect x="11" y="12" width="3" height="3" fill="#ffffff"/><rect x="15" y="12" width="3" height="3" fill="#ffffbe"/><rect x="19" y="12" width="3" height="3" fill="#ffffbe"/><rect x="23" y="12" width="3" height="3" fill="#ffffbe"/><rect x="27" y="12" width="3" height="3" fill="#ffffbe"/><rect x="3" y="16" width="3" height="3" fill="#ffffff"/><rect x="7" y="16" width="3" height="3" fill="#ffffff"/><rect x="11" y="16" width="3" height="3" fill="#ffffbe"/><rect x="15" y="16" width="3" height="3" fill="#ffffbe"/><rect x="19" y="16" width="3" height="3" fill="#ffffbe"/><rect x="23" y="16" width="3" height="3" fill="#ffffbe"/><rect x="27" y="16" width="3" height="3" fill="#ffffbe"/><rect x="3" y="20" width="3" height="3" fill="#ffffff"/><rect x="7" y="20" width="3" height="3" fill="#ffffff"/><rect x="11" y="20" width="3" height="3" fill="#ffffbe"/><rect x="15" y="20" width="3" height="3" fill="#ffffbe"/><rect x="19" y="20" width="3" height="3" fill="#ffffbe"/><rect x="23" y="20" width="3" height="3" fill="#ffffbe"/><rect x="27" y="20" width="3" height="3" fill="#ffffbe"/><rect x="3" y="24" width="3" height="2" fill="#ffffff"/><rect x="7" y="24" width="3" height="2" fill="#ffffff"/><rect x="11" y="24" width="3" height="2" fill="#ffffbe"/><rect x="15" y="24" width="3" height="2" fill="#ffffbe"/><rect x="19" y="24" width="3" height="2" fill="#ffffbe"/><rect x="23" y="24" width="3" height="2" fill="#ffffbe"/><rect x="27" y="24" width="3" height="2" fill="#ffffbe"/><path d="M1,26 L2,24 V26 Z" fill="#b4b47c"/><rect x="2" y="2" width="29" height="2" fill="#2856c6"/><rect x="2" y="4" width="28" height="2" fill="#78bcff"/><rect x="2" y="6" width="28" height="2" fill="#2c62d2"/><path d="M10.500,11.500 H22.500 V15.500 H10.500 Z M6.500,15.500 H10.500 V19.500 H2.500 V15.500 H6.500 M6.500,15.500 V19.500 M14.500,11.500 V15.500 M18.500,11.500 V15.500 M10.500,15.500 V19.500" fill="none" stroke="#a03070" stroke-width="1"/></svg><div class="lbl" style="left:393px;top:139px;">Sett.</div><svg class="abs" style="left:433px;top:104px;overflow:visible" width="32" height="32" viewBox="0 0 32 32"><path d="M31,2 H32 V30 H31 Z" fill="#000"/><path d="M29.500,4 H31 V30 L29.500,30.500 Z" fill="#6c6c20"/><path d="M1,26 H28 L30.500,27 V29 L29,31 H3 L0,28 Z" fill="#a0a048"/><path d="M3,31 H31 V30 H32 V32 H4 Z" fill="#000"/><path d="M0.500,28 H27 L29,26.500" fill="none" stroke="#6c6c20" stroke-width="1"/><path d="M1.500,29.500 H27.500 L29,28" fill="none" stroke="#d8d890" stroke-width="1"/><rect x="2" y="8" width="28" height="18" fill="#b4b47c"/><rect x="3" y="8" width="3" height="3" fill="#ffffff"/><rect x="7" y="8" width="3" height="3" fill="#ffffff"/><rect x="11" y="8" width="3" height="3" fill="#ffffff"/><rect x="15" y="8" width="3" height="3" fill="#ffffbe"/><rect x="19" y="8" width="3" height="3" fill="#ffffbe"/><rect x="23" y="8" width="3" height="3" fill="#ffffbe"/><rect x="27" y="8" width="3" height="3" fill="#ffffbe"/><rect x="3" y="12" width="3" height="3" fill="#ffffff"/><rect x="7" y="12" width="3" height="3" fill="#ffffff"/><rect x="11" y="12" width="3" height="3" fill="#ffffff"/><rect x="15" y="12" width="3" height="3" fill="#ffffbe"/><rect x="19" y="12" width="3" height="3" fill="#ffffbe"/><rect x="23" y="12" width="3" height="3" fill="#ffffbe"/><rect x="27" y="12" width="3" height="3" fill="#ffffbe"/><rect x="3" y="16" width="3" height="3" fill="#ffffff"/><rect x="7" y="16" width="3" height="3" fill="#ffffff"/><rect x="11" y="16" width="3" height="3" fill="#ffffbe"/><rect x="15" y="16" width="3" height="3" fill="#ffffbe"/><rect x="19" y="16" width="3" height="3" fill="#ffffbe"/><rect x="23" y="16" width="3" height="3" fill="#ffffbe"/><rect x="27" y="16" width="3" height="3" fill="#ffffbe"/><rect x="3" y="20" width="3" height="3" fill="#ffffff"/><rect x="7" y="20" width="3" height="3" fill="#ffffff"/><rect x="11" y="20" width="3" height="3" fill="#ffffbe"/><rect x="15" y="20" width="3" height="3" fill="#ffffbe"/><rect x="19" y="20" width="3" height="3" fill="#ffffbe"/><rect x="23" y="20" width="3" height="3" fill="#ffffbe"/><rect x="27" y="20" width="3" height="3" fill="#ffffbe"/><rect x="3" y="24" width="3" height="2" fill="#ffffff"/><rect x="7" y="24" width="3" height="2" fill="#ffffff"/><rect x="11" y="24" width="3" height="2" fill="#ffffbe"/><rect x="15" y="24" width="3" height="2" fill="#ffffbe"/><rect x="19" y="24" width="3" height="2" fill="#ffffbe"/><rect x="23" y="24" width="3" height="2" fill="#ffffbe"/><rect x="27" y="24" width="3" height="2" fill="#ffffbe"/><path d="M1,26 L2,24 V26 Z" fill="#b4b47c"/><rect x="2" y="2" width="29" height="2" fill="#2856c6"/><rect x="2" y="4" width="28" height="2" fill="#78bcff"/><rect x="2" y="6" width="28" height="2" fill="#2c62d2"/><rect x="10.500" y="11.500" width="4" height="4" fill="none" stroke="#a03070" stroke-width="1"/></svg><div class="lbl" style="left:448px;top:139px;">Giorni</div><svg class="abs" style="left:489px;top:105px;overflow:visible" width="32" height="32" viewBox="0 0 32 32"><path d="M31,2 H32 V30 H31 Z" fill="#000"/><path d="M29.500,4 H31 V30 L29.500,30.500 Z" fill="#6c6c20"/><path d="M1,26 H28 L30.500,27 V29 L29,31 H3 L0,28 Z" fill="#a0a048"/><path d="M3,31 H31 V30 H32 V32 H4 Z" fill="#000"/><path d="M0.500,28 H27 L29,26.500" fill="none" stroke="#6c6c20" stroke-width="1"/><path d="M1.500,29.500 H27.500 L29,28" fill="none" stroke="#d8d890" stroke-width="1"/><rect x="2" y="8" width="28" height="18" fill="#b4b47c"/><rect x="3" y="8" width="3" height="3" fill="#ffffff"/><rect x="7" y="8" width="3" height="3" fill="#ffffff"/><rect x="11" y="8" width="3" height="3" fill="#ffffff"/><rect x="15" y="8" width="3" height="3" fill="#ffffbe"/><rect x="19" y="8" width="3" height="3" fill="#ffffbe"/><rect x="23" y="8" width="3" height="3" fill="#ffffbe"/><rect x="27" y="8" width="3" height="3" fill="#ffffbe"/><rect x="3" y="12" width="3" height="3" fill="#ffffff"/><rect x="7" y="12" width="3" height="3" fill="#ffffff"/><rect x="11" y="12" width="3" height="3" fill="#ffffff"/><rect x="15" y="12" width="3" height="3" fill="#ffffbe"/><rect x="19" y="12" width="3" height="3" fill="#ffffbe"/><rect x="23" y="12" width="3" height="3" fill="#ffffbe"/><rect x="27" y="12" width="3" height="3" fill="#ffffbe"/><rect x="3" y="16" width="3" height="3" fill="#ffffff"/><rect x="7" y="16" width="3" height="3" fill="#ffffff"/><rect x="11" y="16" width="3" height="3" fill="#ffffbe"/><rect x="15" y="16" width="3" height="3" fill="#ffffbe"/><rect x="19" y="16" width="3" height="3" fill="#ffffbe"/><rect x="23" y="16" width="3" height="3" fill="#ffffbe"/><rect x="27" y="16" width="3" height="3" fill="#ffffbe"/><rect x="3" y="20" width="3" height="3" fill="#ffffff"/><rect x="7" y="20" width="3" height="3" fill="#ffffff"/><rect x="11" y="20" width="3" height="3" fill="#ffffbe"/><rect x="15" y="20" width="3" height="3" fill="#ffffbe"/><rect x="19" y="20" width="3" height="3" fill="#ffffbe"/><rect x="23" y="20" width="3" height="3" fill="#ffffbe"/><rect x="27" y="20" width="3" height="3" fill="#ffffbe"/><rect x="3" y="24" width="3" height="2" fill="#ffffff"/><rect x="7" y="24" width="3" height="2" fill="#ffffff"/><rect x="11" y="24" width="3" height="2" fill="#ffffbe"/><rect x="15" y="24" width="3" height="2" fill="#ffffbe"/><rect x="19" y="24" width="3" height="2" fill="#ffffbe"/><rect x="23" y="24" width="3" height="2" fill="#ffffbe"/><rect x="27" y="24" width="3" height="2" fill="#ffffbe"/><path d="M1,26 L2,24 V26 Z" fill="#b4b47c"/><rect x="2" y="2" width="29" height="2" fill="#2856c6"/><rect x="2" y="4" width="28" height="2" fill="#78bcff"/><rect x="2" y="6" width="28" height="2" fill="#2c62d2"/><rect x="10.500" y="11.500" width="4" height="4" fill="#fff" stroke="#a03070" stroke-width="1"/><rect x="18.500" y="19.500" width="4" height="4" fill="#fff" stroke="#a03070" stroke-width="1"/><path d="M16,12.500 Q20,11 20.500,17" fill="none" stroke="#a03070" stroke-width="1"/><path d="M19,15.500 L20.500,18 L22,15.500 Z" fill="#a03070"/></svg><div class="lbl" style="left:504.5px;top:140px;">Interv.</div><svg class="abs" style="left:551px;top:104px;overflow:visible" width="32" height="32" viewBox="0 0 32 32"><path d="M31,2 H32 V30 H31 Z" fill="#000"/><path d="M29.500,4 H31 V30 L29.500,30.500 Z" fill="#6c6c20"/><path d="M1,26 H28 L30.500,27 V29 L29,31 H3 L0,28 Z" fill="#a0a048"/><path d="M3,31 H31 V30 H32 V32 H4 Z" fill="#000"/><path d="M0.500,28 H27 L29,26.500" fill="none" stroke="#6c6c20" stroke-width="1"/><path d="M1.500,29.500 H27.500 L29,28" fill="none" stroke="#d8d890" stroke-width="1"/><rect x="2" y="8" width="28" height="18" fill="#b4b47c"/><rect x="3" y="8" width="3" height="3" fill="#ffffff"/><rect x="7" y="8" width="3" height="3" fill="#ffffff"/><rect x="11" y="8" width="3" height="3" fill="#ffffff"/><rect x="15" y="8" width="3" height="3" fill="#ffffbe"/><rect x="19" y="8" width="3" height="3" fill="#ffffbe"/><rect x="23" y="8" width="3" height="3" fill="#ffffbe"/><rect x="27" y="8" width="3" height="3" fill="#ffffbe"/><rect x="3" y="12" width="3" height="3" fill="#ffffff"/><rect x="7" y="12" width="3" height="3" fill="#ffffff"/><rect x="11" y="12" width="3" height="3" fill="#ffffff"/><rect x="15" y="12" width="3" height="3" fill="#ffffbe"/><rect x="19" y="12" width="3" height="3" fill="#ffffbe"/><rect x="23" y="12" width="3" height="3" fill="#ffffbe"/><rect x="27" y="12" width="3" height="3" fill="#ffffbe"/><rect x="3" y="16" width="3" height="3" fill="#ffffff"/><rect x="7" y="16" width="3" height="3" fill="#ffffff"/><rect x="11" y="16" width="3" height="3" fill="#ffffbe"/><rect x="15" y="16" width="3" height="3" fill="#ffffbe"/><rect x="19" y="16" width="3" height="3" fill="#ffffbe"/><rect x="23" y="16" width="3" height="3" fill="#ffffbe"/><rect x="27" y="16" width="3" height="3" fill="#ffffbe"/><rect x="3" y="20" width="3" height="3" fill="#ffffff"/><rect x="7" y="20" width="3" height="3" fill="#ffffff"/><rect x="11" y="20" width="3" height="3" fill="#ffffbe"/><rect x="15" y="20" width="3" height="3" fill="#ffffbe"/><rect x="19" y="20" width="3" height="3" fill="#ffffbe"/><rect x="23" y="20" width="3" height="3" fill="#ffffbe"/><rect x="27" y="20" width="3" height="3" fill="#ffffbe"/><rect x="3" y="24" width="3" height="2" fill="#ffffff"/><rect x="7" y="24" width="3" height="2" fill="#ffffff"/><rect x="11" y="24" width="3" height="2" fill="#ffffbe"/><rect x="15" y="24" width="3" height="2" fill="#ffffbe"/><rect x="19" y="24" width="3" height="2" fill="#ffffbe"/><rect x="23" y="24" width="3" height="2" fill="#ffffbe"/><rect x="27" y="24" width="3" height="2" fill="#ffffbe"/><path d="M1,26 L2,24 V26 Z" fill="#b4b47c"/><rect x="2" y="2" width="29" height="2" fill="#2856c6"/><rect x="2" y="4" width="28" height="2" fill="#78bcff"/><rect x="2" y="6" width="28" height="2" fill="#2c62d2"/><rect x="10.500" y="11.500" width="10" height="9" fill="#fff" stroke="#000" stroke-width="1"/><path d="M12,15 H15 V13 L19,16 L15,19 V17 H12 Z" fill="#000080"/></svg><div class="lbl" style="left:566.5px;top:139px;">24 gen 05</div><svg class="abs" style="left:606px;top:104px;overflow:visible" width="32" height="32" viewBox="0 0 32 32"><path d="M31,2 H32 V30 H31 Z" fill="#000"/><path d="M29.500,4 H31 V30 L29.500,30.500 Z" fill="#6c6c20"/><path d="M1,26 H28 L30.500,27 V29 L29,31 H3 L0,28 Z" fill="#a0a048"/><path d="M3,31 H31 V30 H32 V32 H4 Z" fill="#000"/><path d="M0.500,28 H27 L29,26.500" fill="none" stroke="#6c6c20" stroke-width="1"/><path d="M1.500,29.500 H27.500 L29,28" fill="none" stroke="#d8d890" stroke-width="1"/><rect x="2" y="8" width="28" height="18" fill="#b4b47c"/><rect x="3" y="8" width="3" height="3" fill="#ffffff"/><rect x="7" y="8" width="3" height="3" fill="#ffffff"/><rect x="11" y="8" width="3" height="3" fill="#ffffff"/><rect x="15" y="8" width="3" height="3" fill="#ffffbe"/><rect x="19" y="8" width="3" height="3" fill="#ffffbe"/><rect x="23" y="8" width="3" height="3" fill="#ffffbe"/><rect x="27" y="8" width="3" height="3" fill="#ffffbe"/><rect x="3" y="12" width="3" height="3" fill="#ffffff"/><rect x="7" y="12" width="3" height="3" fill="#ffffff"/><rect x="11" y="12" width="3" height="3" fill="#ffffff"/><rect x="15" y="12" width="3" height="3" fill="#ffffbe"/><rect x="19" y="12" width="3" height="3" fill="#ffffbe"/><rect x="23" y="12" width="3" height="3" fill="#ffffbe"/><rect x="27" y="12" width="3" height="3" fill="#ffffbe"/><rect x="3" y="16" width="3" height="3" fill="#ffffff"/><rect x="7" y="16" width="3" height="3" fill="#ffffff"/><rect x="11" y="16" width="3" height="3" fill="#ffffbe"/><rect x="15" y="16" width="3" height="3" fill="#ffffbe"/><rect x="19" y="16" width="3" height="3" fill="#ffffbe"/><rect x="23" y="16" width="3" height="3" fill="#ffffbe"/><rect x="27" y="16" width="3" height="3" fill="#ffffbe"/><rect x="3" y="20" width="3" height="3" fill="#ffffff"/><rect x="7" y="20" width="3" height="3" fill="#ffffff"/><rect x="11" y="20" width="3" height="3" fill="#ffffbe"/><rect x="15" y="20" width="3" height="3" fill="#ffffbe"/><rect x="19" y="20" width="3" height="3" fill="#ffffbe"/><rect x="23" y="20" width="3" height="3" fill="#ffffbe"/><rect x="27" y="20" width="3" height="3" fill="#ffffbe"/><rect x="3" y="24" width="3" height="2" fill="#ffffff"/><rect x="7" y="24" width="3" height="2" fill="#ffffff"/><rect x="11" y="24" width="3" height="2" fill="#ffffbe"/><rect x="15" y="24" width="3" height="2" fill="#ffffbe"/><rect x="19" y="24" width="3" height="2" fill="#ffffbe"/><rect x="23" y="24" width="3" height="2" fill="#ffffbe"/><rect x="27" y="24" width="3" height="2" fill="#ffffbe"/><path d="M1,26 L2,24 V26 Z" fill="#b4b47c"/><rect x="2" y="2" width="29" height="2" fill="#2856c6"/><rect x="2" y="4" width="28" height="2" fill="#78bcff"/><rect x="2" y="6" width="28" height="2" fill="#2c62d2"/><rect x="10.500" y="11.500" width="10" height="9" fill="#fff" stroke="#000" stroke-width="1"/><path d="M19,15 H16 V13 L12,16 L16,19 V17 H19 Z" fill="#000080"/></svg><div class="lbl" style="left:621.5px;top:139px;">27 gen 05</div><svg class="abs" style="left:669px;top:104px;overflow:visible" width="32" height="32" viewBox="0 0 32 32"><path d="M31,2 H32 V30 H31 Z" fill="#000"/><path d="M29.500,4 H31 V30 L29.500,30.500 Z" fill="#6c6c20"/><path d="M1,26 H28 L30.500,27 V29 L29,31 H3 L0,28 Z" fill="#a0a048"/><path d="M3,31 H31 V30 H32 V32 H4 Z" fill="#000"/><path d="M0.500,28 H27 L29,26.500" fill="none" stroke="#6c6c20" stroke-width="1"/><path d="M1.500,29.500 H27.500 L29,28" fill="none" stroke="#d8d890" stroke-width="1"/><rect x="2" y="8" width="28" height="18" fill="#b4b47c"/><rect x="3" y="8" width="3" height="3" fill="#ffffff"/><rect x="7" y="8" width="3" height="3" fill="#ffffff"/><rect x="11" y="8" width="3" height="3" fill="#ffffff"/><rect x="15" y="8" width="3" height="3" fill="#ffffbe"/><rect x="19" y="8" width="3" height="3" fill="#ffffbe"/><rect x="23" y="8" width="3" height="3" fill="#ffffbe"/><rect x="27" y="8" width="3" height="3" fill="#ffffbe"/><rect x="3" y="12" width="3" height="3" fill="#ffffff"/><rect x="7" y="12" width="3" height="3" fill="#ffffff"/><rect x="11" y="12" width="3" height="3" fill="#ffffff"/><rect x="15" y="12" width="3" height="3" fill="#ffffbe"/><rect x="19" y="12" width="3" height="3" fill="#ffffbe"/><rect x="23" y="12" width="3" height="3" fill="#ffffbe"/><rect x="27" y="12" width="3" height="3" fill="#ffffbe"/><rect x="3" y="16" width="3" height="3" fill="#ffffff"/><rect x="7" y="16" width="3" height="3" fill="#ffffff"/><rect x="11" y="16" width="3" height="3" fill="#ffffbe"/><rect x="15" y="16" width="3" height="3" fill="#ffffbe"/><rect x="19" y="16" width="3" height="3" fill="#ffffbe"/><rect x="23" y="16" width="3" height="3" fill="#ffffbe"/><rect x="27" y="16" width="3" height="3" fill="#ffffbe"/><rect x="3" y="20" width="3" height="3" fill="#ffffff"/><rect x="7" y="20" width="3" height="3" fill="#ffffff"/><rect x="11" y="20" width="3" height="3" fill="#ffffbe"/><rect x="15" y="20" width="3" height="3" fill="#ffffbe"/><rect x="19" y="20" width="3" height="3" fill="#ffffbe"/><rect x="23" y="20" width="3" height="3" fill="#ffffbe"/><rect x="27" y="20" width="3" height="3" fill="#ffffbe"/><rect x="3" y="24" width="3" height="2" fill="#ffffff"/><rect x="7" y="24" width="3" height="2" fill="#ffffff"/><rect x="11" y="24" width="3" height="2" fill="#ffffbe"/><rect x="15" y="24" width="3" height="2" fill="#ffffbe"/><rect x="19" y="24" width="3" height="2" fill="#ffffbe"/><rect x="23" y="24" width="3" height="2" fill="#ffffbe"/><rect x="27" y="24" width="3" height="2" fill="#ffffbe"/><path d="M1,26 L2,24 V26 Z" fill="#b4b47c"/><rect x="2" y="2" width="29" height="2" fill="#2856c6"/><rect x="2" y="4" width="28" height="2" fill="#78bcff"/><rect x="2" y="6" width="28" height="2" fill="#2c62d2"/><defs><linearGradient id="rbw" x1="0" y1="0" x2="1" y2="0"><stop offset="0" stop-color="#ffff00"/><stop offset="0.200" stop-color="#a0ff00"/><stop offset="0.350" stop-color="#00f040"/><stop offset="0.550" stop-color="#00f0ff"/><stop offset="0.750" stop-color="#0020ff"/><stop offset="0.900" stop-color="#a000ff"/><stop offset="1" stop-color="#ff00c0"/></linearGradient></defs><path d="M0.500,13.500 H25.500 V9.500 L32,16 L25.500,22.500 V18.500 H0.500 Z" fill="#000"/><rect x="1.500" y="14.500" width="23" height="3" fill="url(#rbw)"/><path d="M24.500,14.500 H26.500 V12 L30.500,16 L26.500,20 V17.500 H24.500 Z" fill="#ff0020"/></svg><div class="lbl" style="left:685px;top:139px;">Sposta</div><svg class="abs" style="left:731.5px;top:104px;overflow:visible" width="32" height="32" viewBox="0 0 32 32"><rect x="4.5" y="6.2" width="23" height="17" fill="#a8a8a8" opacity="0.600"/><rect x="4" y="5.5" width="22" height="16.500" fill="#fff" stroke="#2c6cd8" stroke-width="1.400"/><rect x="4" y="5.5" width="22" height="4" fill="#3478e4"/><rect x="4" y="6" width="22" height="1.200" fill="#5c9cf4"/><rect x="23" y="6.5" width="2" height="2" fill="#f05828"/><rect x="18.5" y="7" width="1" height="1" fill="#b8d0f8"/><rect x="20.5" y="7" width="1" height="1" fill="#b8d0f8"/><rect x="6" y="11" width="18" height="1" fill="#c4c4c4"/><rect x="6" y="13" width="18" height="1" fill="#c4c4c4"/><rect x="6" y="15" width="18" height="1" fill="#c4c4c4"/><rect x="6" y="17" width="18" height="1" fill="#c4c4c4"/><rect x="6" y="19" width="18" height="1" fill="#c4c4c4"/><rect x="8.5" y="12.2" width="23" height="17" fill="#a8a8a8" opacity="0.600"/><rect x="8" y="11.5" width="22" height="16.500" fill="#fff" stroke="#2c6cd8" stroke-width="1.400"/><rect x="8" y="11.5" width="22" height="4" fill="#3478e4"/><rect x="8" y="12" width="22" height="1.200" fill="#5c9cf4"/><rect x="27" y="12.5" width="2" height="2" fill="#f05828"/><rect x="22.5" y="13" width="1" height="1" fill="#b8d0f8"/><rect x="24.5" y="13" width="1" height="1" fill="#b8d0f8"/><rect x="10" y="17" width="18" height="1" fill="#c4c4c4"/><rect x="10" y="19" width="18" height="1" fill="#c4c4c4"/><rect x="10" y="21" width="18" height="1" fill="#c4c4c4"/><rect x="10" y="23" width="18" height="1" fill="#c4c4c4"/><rect x="10" y="25" width="18" height="1" fill="#c4c4c4"/></svg><div class="lbl" style="left:748px;top:139px;">Finestra</div><svg class="abs" style="left:121px;top:127px" width="5" height="3" viewBox="0 0 5 3"><path d="M0,0 H5 L2.500,3 Z" fill="#000"/></svg><svg class="abs" style="left:778.5px;top:127px" width="5" height="3" viewBox="0 0 5 3"><path d="M0,0 H5 L2.500,3 Z" fill="#000"/></svg><div class="sep" style="left:58.5px;top:104px;height:48px"></div><div class="sep" style="left:134.5px;top:104px;height:48px"></div><div class="sep" style="left:252px;top:104px;height:48px"></div><div class="sep" style="left:536px;top:104px;height:48px"></div><div class="sep" style="left:654px;top:104px;height:48px"></div><div class="sep" style="left:716px;top:104px;height:48px"></div>
<!-- tree panel -->
<div class="abs" style="left:1px;top:155px;width:267px;height:579px;box-sizing:border-box;border:1px solid #fff;border-top-color:#aca899;border-left-color:#aca899"><div style="width:100%;height:100%;box-sizing:border-box;background:#fff;border:1px solid #f3f1e4;border-top-color:#716f64;border-left-color:#716f64"></div></div>
<div class="abs" style="left:11px;top:171px;width:1px;height:303px;background:repeating-linear-gradient(to bottom,#a8a490 0,#a8a490 1px,transparent 1px,transparent 2px)"></div><div class="abs" style="left:17px;top:165px;height:1px;width:5px;background:repeating-linear-gradient(to right,#a8a490 0,#a8a490 1px,transparent 1px,transparent 2px)"></div><div class="abs" style="left:7px;top:161px;width:9px;height:9px;box-sizing:border-box;border:1px solid #a8a490;background:#fff"><div class="abs" style="left:1px;top:3px;width:5px;height:1px;background:#000"></div></div><svg class="abs" style="left:22px;top:157px" width="16" height="16" viewBox="0 0 16 16"><g fill="#b8b8c0"><rect x="0" y="1" width="16" height="1"/><rect x="0" y="3" width="16" height="1"/><rect x="0" y="5" width="16" height="1"/><rect x="0" y="15" width="16" height="1"/></g><g fill="#a8a8a8"><rect x="2" y="8" width="3" height="7"/><rect x="7" y="5" width="3" height="10"/><rect x="12" y="6" width="3" height="9"/></g><rect x="1" y="7" width="3" height="7" fill="#000080"/><rect x="6" y="4" width="3" height="10" fill="#000080"/><rect x="11" y="5" width="3" height="9" fill="#000080"/></svg><div class="abs" style="left:41px;top:157px;width:43px;height:18px;background:#ece9d8"></div><div class="tree" style="left:44px;top:159px;line-height:14px;color:#000;">Grafico</div><div class="abs" style="left:30px;top:175px;width:1px;height:6px;background:repeating-linear-gradient(to bottom,#a8a490 0,#a8a490 1px,transparent 1px,transparent 2px)"></div><div class="abs" style="left:36px;top:185px;height:1px;width:7px;background:repeating-linear-gradient(to right,#a8a490 0,#a8a490 1px,transparent 1px,transparent 2px)"></div><div class="abs" style="left:26px;top:181px;width:9px;height:9px;box-sizing:border-box;border:1px solid #a8a490;background:#fff"><div class="abs" style="left:1px;top:3px;width:5px;height:1px;background:#000"></div></div><svg class="abs" style="left:44px;top:176px" width="12" height="17" viewBox="0 0 12 17"><defs><linearGradient id="mb" x1="0" y1="0" x2="0.700" y2="1"><stop offset="0" stop-color="#3890f0"/><stop offset="0.500" stop-color="#48b8ff"/><stop offset="1" stop-color="#2880e8"/></linearGradient></defs><path d="M4.300,11 L9.800,9 L9.800,15 Q7,17.500 3,15.500 Z" fill="#283098"/><path d="M0,1.200 L7,0.400 L10.800,1.200 L10.800,7.800 L7.600,10.200 L2.700,9.900 L0.500,5 Z" fill="url(#mb)"/><path d="M9,0.800 L10.800,1.200 L10.800,7.800 L9,9 Z" fill="#2040b0"/><path d="M0,1.200 L7,0.400 L9,0.800 L1,2.500 Z" fill="#3060c8"/><circle cx="3.600" cy="12.900" r="2.500" fill="#f0f0f4"/><path d="M1.500,14 Q3.600,16.500 6,14.500 Q4,15.500 1.500,14 Z" fill="#a0a0b0"/></svg><div class="tree" style="left:62.5px;top:177px;line-height:14px;color:#000;">Piano terra</div><div class="abs" style="left:49px;top:193px;width:1px;height:155px;background:repeating-linear-gradient(to bottom,#a8a490 0,#a8a490 1px,transparent 1px,transparent 2px)"></div><div class="abs" style="left:51px;top:203px;height:1px;width:9px;background:repeating-linear-gradient(to right,#a8a490 0,#a8a490 1px,transparent 1px,transparent 2px)"></div><svg class="abs" style="left:63.55px;top:197.25px;overflow:visible" width="9" height="9" viewBox="0 0 9 9"><circle cx="4.500" cy="4.500" r="3.500" fill="#fff" stroke="#000" stroke-width="1.100"/><circle cx="4.500" cy="4.500" r="1.800" fill="#000"/></svg><div class="tree" style="left:81px;top:195px;line-height:14px;color:#000080;font-weight:bold;">kWh</div><div class="abs" style="left:51px;top:221px;height:1px;width:9px;background:repeating-linear-gradient(to right,#a8a490 0,#a8a490 1px,transparent 1px,transparent 2px)"></div><svg class="abs" style="left:63.55px;top:215.25px;overflow:visible" width="9" height="9" viewBox="0 0 9 9"><circle cx="4.500" cy="4.500" r="3.500" fill="#fff" stroke="#000" stroke-width="1.100"/></svg><div class="tree" style="left:81px;top:213px;line-height:14px;color:#008000;font-weight:bold;">kvarh</div><div class="abs" style="left:51px;top:239px;height:1px;width:9px;background:repeating-linear-gradient(to right,#a8a490 0,#a8a490 1px,transparent 1px,transparent 2px)"></div><svg class="abs" style="left:63.55px;top:233.25px;overflow:visible" width="9" height="9" viewBox="0 0 9 9"><circle cx="4.500" cy="4.500" r="3.500" fill="#fff" stroke="#000" stroke-width="1.100"/></svg><div class="tree" style="left:81px;top:231px;line-height:14px;color:#008080;font-weight:bold;">kVAh</div><div class="abs" style="left:51px;top:257px;height:1px;width:9px;background:repeating-linear-gradient(to right,#a8a490 0,#a8a490 1px,transparent 1px,transparent 2px)"></div><svg class="abs" style="left:63.55px;top:251.25px;overflow:visible" width="9" height="9" viewBox="0 0 9 9"><circle cx="4.500" cy="4.500" r="3.500" fill="#fff" stroke="#000" stroke-width="1.100"/></svg><div class="tree" style="left:81px;top:249px;line-height:14px;color:#800000;font-weight:bold;">PF</div><div class="abs" style="left:51px;top:275px;height:1px;width:9px;background:repeating-linear-gradient(to right,#a8a490 0,#a8a490 1px,transparent 1px,transparent 2px)"></div><svg class="abs" style="left:63.55px;top:269.25px;overflow:visible" width="9" height="9" viewBox="0 0 9 9"><circle cx="4.500" cy="4.500" r="3.500" fill="#fff" stroke="#000" stroke-width="1.100"/></svg><div class="tree" style="left:81px;top:267px;line-height:14px;color:#800080;font-weight:bold;">W av</div><div class="abs" style="left:51px;top:293px;height:1px;width:9px;background:repeating-linear-gradient(to right,#a8a490 0,#a8a490 1px,transparent 1px,transparent 2px)"></div><svg class="abs" style="left:63.55px;top:287.25px;overflow:visible" width="9" height="9" viewBox="0 0 9 9"><circle cx="4.500" cy="4.500" r="3.500" fill="#fff" stroke="#000" stroke-width="1.100"/></svg><div class="tree" style="left:81px;top:285px;line-height:14px;color:#808000;font-weight:bold;">var av</div><div class="abs" style="left:51px;top:311px;height:1px;width:9px;background:repeating-linear-gradient(to right,#a8a490 0,#a8a490 1px,transparent 1px,transparent 2px)"></div><svg class="abs" style="left:63.55px;top:305.25px;overflow:visible" width="9" height="9" viewBox="0 0 9 9"><circle cx="4.500" cy="4.500" r="3.500" fill="#fff" stroke="#000" stroke-width="1.100"/></svg><div class="tree" style="left:81px;top:303px;line-height:14px;color:#c8bcbc;font-weight:bold;">VA av</div><div class="abs" style="left:51px;top:329px;height:1px;width:9px;background:repeating-linear-gradient(to right,#a8a490 0,#a8a490 1px,transparent 1px,transparent 2px)"></div><svg class="abs" style="left:63.55px;top:323.25px;overflow:visible" width="9" height="9" viewBox="0 0 9 9"><g stroke="#f00010" stroke-width="1"><path d="M4.500,-2.500 V-0.500 M4.500,9.500 V11.500 M-2.500,4.500 H-0.500 M9.500,4.500 H11.500 M-0.500,-0.500 L1,1 M9.500,-0.500 L8,1 M-0.500,9.500 L1,8 M9.500,9.500 L8,8"/></g><circle cx="4.500" cy="4.500" r="3.500" fill="#fff" stroke="#000" stroke-width="1.100"/><circle cx="4.500" cy="4.500" r="2" fill="#f00010"/></svg><div class="tree" style="left:81px;top:321px;line-height:14px;color:#857878;font-weight:bold;">PF av</div><div class="abs" style="left:51px;top:347px;height:1px;width:9px;background:repeating-linear-gradient(to right,#a8a490 0,#a8a490 1px,transparent 1px,transparent 2px)"></div><svg class="abs" style="left:63.55px;top:341.25px;overflow:visible" width="9" height="9" viewBox="0 0 9 9"><circle cx="4.500" cy="4.500" r="3.500" fill="#fff" stroke="#000" stroke-width="1.100"/></svg><div class="tree" style="left:81px;top:339px;line-height:14px;color:#0000ff;font-weight:bold;">Costo</div><div class="abs" style="left:7px;top:361px;width:9px;height:9px;box-sizing:border-box;border:1px solid #a8a490;background:#fff"><div class="abs" style="left:1px;top:3px;width:5px;height:1px;background:#000"></div></div><div class="abs" style="left:17px;top:365px;height:1px;width:5px;background:repeating-linear-gradient(to right,#a8a490 0,#a8a490 1px,transparent 1px,transparent 2px)"></div><svg class="abs" style="left:22px;top:355px" width="15" height="14" viewBox="0 0 15 14"><path d="M2.500,7 L8.700,2.500 L12.800,7 V11 Q8,14.500 2.500,11 Z" fill="#e4eefc" stroke="#8090b0" stroke-width="0.600"/><path d="M8.700,2.500 L12.800,7 V11 Q11,12.500 9,12.800 Z" fill="#b8d0f4"/><path d="M8.700,1.400 L13.600,6.800" stroke="#505868" stroke-width="1"/><path d="M1.100,6.200 L8.700,1.400 L9.500,2.400 L4.700,7.900 Z" fill="#e04010"/><rect x="5.500" y="7.500" width="2" height="2" fill="#2868e0"/><rect x="9" y="8" width="1.500" height="3.500" fill="#1848c0"/></svg><div class="tree" style="left:43.5px;top:357px;line-height:14px;color:#000;">Copia di dbMyPC.edb</div><div class="abs" style="left:30px;top:373px;width:1px;height:83px;background:repeating-linear-gradient(to bottom,#a8a490 0,#a8a490 1px,transparent 1px,transparent 2px)"></div><div class="abs" style="left:32px;top:383px;height:1px;width:10px;background:repeating-linear-gradient(to right,#a8a490 0,#a8a490 1px,transparent 1px,transparent 2px)"></div><svg class="abs" style="left:44px;top:374px" width="12" height="17" viewBox="0 0 12 17"><path d="M4.300,11 L9.800,9 L9.800,15 Q7,17.500 3,15.500 Z" fill="#283098"/><path d="M0,1.200 L7,0.400 L10.800,1.200 L10.800,7.800 L7.600,10.200 L2.700,9.900 L0.500,5 Z" fill="#101018"/><path d="M9,0.800 L10.800,1.200 L10.800,7.800 L9,9 Z" fill="#3050c0"/><path d="M0,1.200 L7,0.400 L9,0.800 L1,2.200 Z" fill="#4060c8"/><circle cx="3.600" cy="12.900" r="2.500" fill="#f0f0f4"/><path d="M1.500,14 Q3.600,16.500 6,14.500 Q4,15.500 1.500,14 Z" fill="#a0a0b0"/></svg><div class="tree" style="left:62.5px;top:375px;line-height:14px;color:#000;">Piano terra</div><div class="abs" style="left:32px;top:401px;height:1px;width:10px;background:repeating-linear-gradient(to right,#a8a490 0,#a8a490 1px,transparent 1px,transparent 2px)"></div><svg class="abs" style="left:44px;top:392px" width="12" height="17" viewBox="0 0 12 17"><path d="M4.300,11 L9.800,9 L9.800,15 Q7,17.500 3,15.500 Z" fill="#283098"/><path d="M0,1.200 L7,0.400 L10.800,1.200 L10.800,7.800 L7.600,10.200 L2.700,9.900 L0.500,5 Z" fill="#101018"/><path d="M9,0.800 L10.800,1.200 L10.800,7.800 L9,9 Z" fill="#3050c0"/><path d="M0,1.200 L7,0.400 L9,0.800 L1,2.200 Z" fill="#4060c8"/><circle cx="3.600" cy="12.900" r="2.500" fill="#f0f0f4"/><path d="M1.500,14 Q3.600,16.500 6,14.500 Q4,15.500 1.500,14 Z" fill="#a0a0b0"/></svg><div class="tree" style="left:62.5px;top:393px;line-height:14px;color:#000;">Produzione</div><div class="abs" style="left:32px;top:419px;height:1px;width:10px;background:repeating-linear-gradient(to right,#a8a490 0,#a8a490 1px,transparent 1px,transparent 2px)"></div><svg class="abs" style="left:44px;top:410px" width="12" height="17" viewBox="0 0 12 17"><path d="M4.300,11 L9.800,9 L9.800,15 Q7,17.500 3,15.500 Z" fill="#283098"/><path d="M0,1.200 L7,0.400 L10.800,1.200 L10.800,7.800 L7.600,10.200 L2.700,9.900 L0.500,5 Z" fill="#101018"/><path d="M9,0.800 L10.800,1.200 L10.800,7.800 L9,9 Z" fill="#3050c0"/><path d="M0,1.200 L7,0.400 L9,0.800 L1,2.200 Z" fill="#4060c8"/><circle cx="3.600" cy="12.900" r="2.500" fill="#f0f0f4"/><path d="M1.500,14 Q3.600,16.500 6,14.500 Q4,15.500 1.500,14 Z" fill="#a0a0b0"/></svg><div class="tree" style="left:62.5px;top:411px;line-height:14px;color:#000;">Generale ENEL</div><div class="abs" style="left:32px;top:437px;height:1px;width:10px;background:repeating-linear-gradient(to right,#a8a490 0,#a8a490 1px,transparent 1px,transparent 2px)"></div><svg class="abs" style="left:44px;top:428px" width="12" height="17" viewBox="0 0 12 17"><path d="M4.300,11 L9.800,9 L9.800,15 Q7,17.500 3,15.500 Z" fill="#283098"/><path d="M0,1.200 L7,0.400 L10.800,1.200 L10.800,7.800 L7.600,10.200 L2.700,9.900 L0.500,5 Z" fill="#101018"/><path d="M9,0.800 L10.800,1.200 L10.800,7.800 L9,9 Z" fill="#3050c0"/><path d="M0,1.200 L7,0.400 L9,0.800 L1,2.200 Z" fill="#4060c8"/><circle cx="3.600" cy="12.900" r="2.500" fill="#f0f0f4"/><path d="M1.500,14 Q3.600,16.500 6,14.500 Q4,15.500 1.500,14 Z" fill="#a0a0b0"/></svg><div class="tree" style="left:62.5px;top:429px;line-height:14px;color:#000;">Primo piano</div><div class="abs" style="left:32px;top:455px;height:1px;width:10px;background:repeating-linear-gradient(to right,#a8a490 0,#a8a490 1px,transparent 1px,transparent 2px)"></div><svg class="abs" style="left:44px;top:446px" width="12" height="17" viewBox="0 0 12 17"><path d="M4.300,11 L9.800,9 L9.800,15 Q7,17.500 3,15.500 Z" fill="#283098"/><path d="M0,1.200 L7,0.400 L10.800,1.200 L10.800,7.800 L7.600,10.200 L2.700,9.900 L0.500,5 Z" fill="#101018"/><path d="M9,0.800 L10.800,1.200 L10.800,7.800 L9,9 Z" fill="#3050c0"/><path d="M0,1.200 L7,0.400 L9,0.800 L1,2.200 Z" fill="#4060c8"/><circle cx="3.600" cy="12.900" r="2.500" fill="#f0f0f4"/><path d="M1.500,14 Q3.600,16.500 6,14.500 Q4,15.500 1.500,14 Z" fill="#a0a0b0"/></svg><div class="tree" style="left:62.5px;top:447px;line-height:14px;color:#000;">Muletti</div><div class="abs" style="left:13px;top:473px;height:1px;width:9px;background:repeating-linear-gradient(to right,#a8a490 0,#a8a490 1px,transparent 1px,transparent 2px)"></div><svg class="abs" style="left:22px;top:463px" width="14" height="16" viewBox="0 0 14 16"><path d="M0.500,3 Q7,0 13.500,2 L12,14 Q7,16 2,14 Z" fill="#c8e0f8" stroke="#90b0d8" stroke-width="0.800"/><ellipse cx="7" cy="2.700" rx="6.300" ry="1.500" fill="#e8f4ff" stroke="#90b0d8" stroke-width="0.600"/><path d="M5,6 H10 V12 H5 Z" fill="#30b040"/><path d="M6,8 L8,7 L9,9 M9,11 L7,11.500 L6,10" stroke="#e8ffe8" stroke-width="0.800" fill="none"/></svg><div class="tree" style="left:43.5px;top:465px;line-height:14px;color:#000;">Cestino</div>
<!-- chart panel -->
<div class="abs" style="left:274px;top:154px;width:750px;height:580px;box-sizing:border-box;border:1px solid #fff;border-top-color:#716f64;border-left-color:#716f64"><div style="width:100%;height:100%;box-sizing:border-box;border:1px solid #f3f1e4;border-top-color:#aca899;border-left-color:#aca899"><div style="width:100%;height:100%;box-sizing:border-box;border:1px solid #fff;border-top-color:#aca899;border-left-color:#aca899"><div style="width:100%;height:100%;box-sizing:border-box;background:#fff;border:1px solid #f3f1e4;border-top-color:#716f64;border-left-color:#716f64"></div></div></div></div>
<svg class="abs" style="left:0;top:0" width="1024" height="738" viewBox="0 0 1024 738">
 <defs><clipPath id="pc"><rect x="321" y="207.500" width="658" height="463.500"/></clipPath></defs>
 <rect x="321" y="208" width="1" height="463" fill="#c8c8c8"/><rect x="376" y="208" width="1" height="463" fill="#c8c8c8"/><rect x="430" y="208" width="1" height="463" fill="#c8c8c8"/><rect x="485" y="208" width="1" height="463" fill="#c8c8c8"/><rect x="540" y="208" width="1" height="463" fill="#c8c8c8"/><rect x="594" y="208" width="1" height="463" fill="#c8c8c8"/><rect x="649" y="208" width="1" height="463" fill="#c8c8c8"/><rect x="704" y="208" width="1" height="463" fill="#c8c8c8"/><rect x="758" y="208" width="1" height="463" fill="#c8c8c8"/><rect x="813" y="208" width="1" height="463" fill="#c8c8c8"/><rect x="868" y="208" width="1" height="463" fill="#c8c8c8"/><rect x="922" y="208" width="1" height="463" fill="#c8c8c8"/><rect x="977" y="208" width="1" height="463" fill="#c8c8c8"/><rect x="321" y="208" width="657" height="1" fill="#c8c8c8"/><rect x="321" y="260" width="657" height="1" fill="#c8c8c8"/><rect x="321" y="316" width="657" height="1" fill="#c8c8c8"/><rect x="321" y="372" width="657" height="1" fill="#c8c8c8"/><rect x="321" y="428" width="657" height="1" fill="#c8c8c8"/><rect x="321" y="484" width="657" height="1" fill="#c8c8c8"/><rect x="321" y="540" width="657" height="1" fill="#c8c8c8"/><rect x="321" y="596" width="657" height="1" fill="#c8c8c8"/><rect x="321" y="670" width="657" height="1" fill="#c8c8c8"/>
 <g clip-path="url(#pc)">
 <polyline points="321.5,266.7 330.6,247.8 339.7,247.8 348.8,266.7 357.9,317.0 367.1,277.4 376.2,278.7 385.3,318.7 394.4,487.0 403.5,655.2 412.6,661.0 421.7,669.0 430.8,642.0 439.9,649.6 449.1,609.0 458.2,607.7 467.3,623.6 476.4,619.4 485.5,660.4 494.6,636.6 503.7,260.2 512.8,208.0 521.9,230.9 531.1,237.4 540.2,243.3 549.3,249.4 558.4,239.7 567.5,240.7 576.6,292.0 585.7,259.5 594.8,268.3 603.9,295.0 613.1,485.0 622.2,652.0 631.3,656.1 640.4,639.2" fill="none" stroke="#857878" stroke-width="2.200"/>
 <polyline points="676.8,641.5 685.9,642.5 695.1,649.0 704.2,643.0 713.3,638.0 722.4,470.0 731.5,319.7 740.6,304.7 749.7,327.8 758.8,324.6 767.9,333.7 777.0,319.3 786.2,315.4 795.3,351.2 804.4,327.5 813.5,320.7 822.6,359.3 831.7,508.5 840.8,647.0 849.9,623.0 859.0,649.6 868.2,615.5 877.3,616.5 886.4,571.6 895.5,557.6 904.6,574.8 913.7,586.2 922.8,636.0 931.9,619.4 941.0,416.0 950.2,212.4 959.3,239.0 968.4,234.0 977.5,240.0" fill="none" stroke="#857878" stroke-width="2.200"/>
 <polyline points="321.5,634.0 330.6,669.5 339.7,634.0 348.8,669.5 357.9,634.0 367.1,634.0 376.2,669.5 385.3,634.0 394.4,492.0 403.5,350.0 412.6,314.5 421.7,279.0 430.8,350.0 439.9,350.0 449.1,421.0 458.2,421.0 467.3,385.5 476.4,350.0 485.5,208.0 494.6,421.0 503.7,634.0 512.8,669.5 521.9,634.0 531.1,634.0 540.2,634.0 549.3,669.5 558.4,634.0 567.5,634.0 576.6,634.0 585.7,669.5 594.8,634.0 603.9,634.0 613.1,527.5 622.2,385.5 631.3,243.5 640.4,527.5" fill="none" stroke="#000080" stroke-width="2.250"/>
 <polyline points="676.8,527.5 685.9,314.5 695.1,314.5 704.2,314.5 713.3,421.0 722.4,563.0 731.5,634.0 740.6,634.0 749.7,634.0 758.8,634.0 767.9,634.0 777.0,634.0 786.2,634.0 795.3,634.0 804.4,634.0 813.5,634.0 822.6,634.0 831.7,492.0 840.8,314.5 849.9,279.0 859.0,279.0 868.2,350.0 877.3,350.0 886.4,456.5 895.5,421.0 904.6,421.0 913.7,314.5 922.8,314.5 931.9,421.0 941.0,598.5 950.2,634.0 959.3,634.0 968.4,634.0 977.5,634.0" fill="none" stroke="#000080" stroke-width="2.250"/>
 </g>
 <rect x="317" y="208" width="1" height="463" fill="#857878"/><rect x="314" y="208" width="3" height="1" fill="#857878"/><text class="ax" x="312.500" y="212" text-anchor="end">+0.835</text><rect x="314" y="260" width="3" height="1" fill="#857878"/><text class="ax" x="312.500" y="264" text-anchor="end">+0.830</text><rect x="314" y="316" width="3" height="1" fill="#857878"/><text class="ax" x="312.500" y="320" text-anchor="end">+0.825</text><rect x="314" y="372" width="3" height="1" fill="#857878"/><text class="ax" x="312.500" y="376" text-anchor="end">+0.820</text><rect x="314" y="428" width="3" height="1" fill="#857878"/><text class="ax" x="312.500" y="432" text-anchor="end">+0.815</text><rect x="314" y="484" width="3" height="1" fill="#857878"/><text class="ax" x="312.500" y="488" text-anchor="end">+0.810</text><rect x="314" y="540" width="3" height="1" fill="#857878"/><text class="ax" x="312.500" y="544" text-anchor="end">+0.805</text><rect x="314" y="596" width="3" height="1" fill="#857878"/><text class="ax" x="312.500" y="600" text-anchor="end">+0.800</text><rect x="314" y="670" width="3" height="1" fill="#857878"/><text class="ax" x="312.500" y="674" text-anchor="end">+0.793</text><rect x="981" y="208" width="1" height="463" fill="#000080"/><rect x="982" y="208" width="4" height="1" fill="#000080"/><text class="ax" x="985.500" y="212" textLength="32" lengthAdjust="spacingAndGlyphs">+15.00</text><rect x="982" y="244" width="4" height="1" fill="#000080"/><text class="ax" x="985.500" y="248" textLength="32" lengthAdjust="spacingAndGlyphs">+14.00</text><rect x="982" y="315" width="4" height="1" fill="#000080"/><text class="ax" x="985.500" y="319" textLength="32" lengthAdjust="spacingAndGlyphs">+12.00</text><rect x="982" y="386" width="4" height="1" fill="#000080"/><text class="ax" x="985.500" y="390" textLength="32" lengthAdjust="spacingAndGlyphs">+10.00</text><rect x="982" y="457" width="4" height="1" fill="#000080"/><text class="ax" x="985.500" y="461" textLength="32" lengthAdjust="spacingAndGlyphs">+08.00</text><rect x="982" y="528" width="4" height="1" fill="#000080"/><text class="ax" x="985.500" y="532" textLength="32" lengthAdjust="spacingAndGlyphs">+06.00</text><rect x="982" y="599" width="4" height="1" fill="#000080"/><text class="ax" x="985.500" y="603" textLength="32" lengthAdjust="spacingAndGlyphs">+04.00</text><rect x="982" y="670" width="4" height="1" fill="#000080"/><text class="ax" x="985.500" y="674" textLength="32" lengthAdjust="spacingAndGlyphs">+02.00</text><rect x="321" y="674" width="657" height="1" fill="#000"/><rect x="321" y="674" width="1" height="5" fill="#000"/><text class="ax" x="321" y="689" text-anchor="middle" textLength="41" lengthAdjust="spacingAndGlyphs">24/01 00</text><rect x="376" y="674" width="1" height="5" fill="#000"/><text class="ax" x="376" y="689" text-anchor="middle" textLength="41" lengthAdjust="spacingAndGlyphs">24/01 06</text><rect x="430" y="674" width="1" height="5" fill="#000"/><text class="ax" x="430" y="689" text-anchor="middle" textLength="41" lengthAdjust="spacingAndGlyphs">24/01 12</text><rect x="485" y="674" width="1" height="5" fill="#000"/><text class="ax" x="485" y="689" text-anchor="middle" textLength="41" lengthAdjust="spacingAndGlyphs">24/01 18</text><rect x="540" y="674" width="1" height="5" fill="#000"/><text class="ax" x="540" y="689" text-anchor="middle" textLength="41" lengthAdjust="spacingAndGlyphs">25/01 00</text><rect x="594" y="674" width="1" height="5" fill="#000"/><text class="ax" x="594" y="689" text-anchor="middle" textLength="41" lengthAdjust="spacingAndGlyphs">25/01 06</text><rect x="649" y="674" width="1" height="5" fill="#000"/><text class="ax" x="649" y="689" text-anchor="middle" textLength="41" lengthAdjust="spacingAndGlyphs">25/01 12</text><rect x="704" y="674" width="1" height="5" fill="#000"/><text class="ax" x="704" y="689" text-anchor="middle" textLength="41" lengthAdjust="spacingAndGlyphs">25/01 18</text><rect x="758" y="674" width="1" height="5" fill="#000"/><text class="ax" x="758" y="689" text-anchor="middle" textLength="41" lengthAdjust="spacingAndGlyphs">26/01 00</text><rect x="813" y="674" width="1" height="5" fill="#000"/><text class="ax" x="813" y="689" text-anchor="middle" textLength="41" lengthAdjust="spacingAndGlyphs">26/01 06</text><rect x="868" y="674" width="1" height="5" fill="#000"/><text class="ax" x="868" y="689" text-anchor="middle" textLength="41" lengthAdjust="spacingAndGlyphs">26/01 12</text><rect x="922" y="674" width="1" height="5" fill="#000"/><text class="ax" x="922" y="689" text-anchor="middle" textLength="41" lengthAdjust="spacingAndGlyphs">26/01 18</text><rect x="977" y="674" width="1" height="5" fill="#000"/><text class="ax" x="977" y="689" text-anchor="middle" textLength="41" lengthAdjust="spacingAndGlyphs">27/01 00</text><text x="649.500" y="190" text-anchor="middle" style="font-family:'Liberation Sans',sans-serif;font-size:24px;fill:#800000">Piano terra</text><text x="649" y="711.500" text-anchor="middle" xml:space="preserve" style="font-family:'Liberation Sans',sans-serif;font-size:16px;font-weight:bold;fill:#800000;white-space:pre">lunedì 24 gennaio 2005  -  giovedì 27 gennaio 2005</text><text x="959.500" y="717.500" text-anchor="middle" style="font-family:'Liberation Sans',sans-serif;font-size:10.600px;font-weight:bold;fill:#857878">23/01 21 ; +09.48</text><text transform="translate(324,203.500) rotate(-45)" style="font-family:'Liberation Sans',sans-serif;font-size:15px;fill:#857878">PF av</text><text transform="translate(988,203.500) rotate(-45)" style="font-family:'Liberation Sans',sans-serif;font-size:15px;font-weight:bold;fill:#000080">kWh</text>
</svg>
<!-- bottom border -->
<div class="abs" style="left:0;top:734px;width:1024px;height:4px;background:linear-gradient(to bottom,#1c5fd4,#3a8bf0)"></div>
</body></html>
